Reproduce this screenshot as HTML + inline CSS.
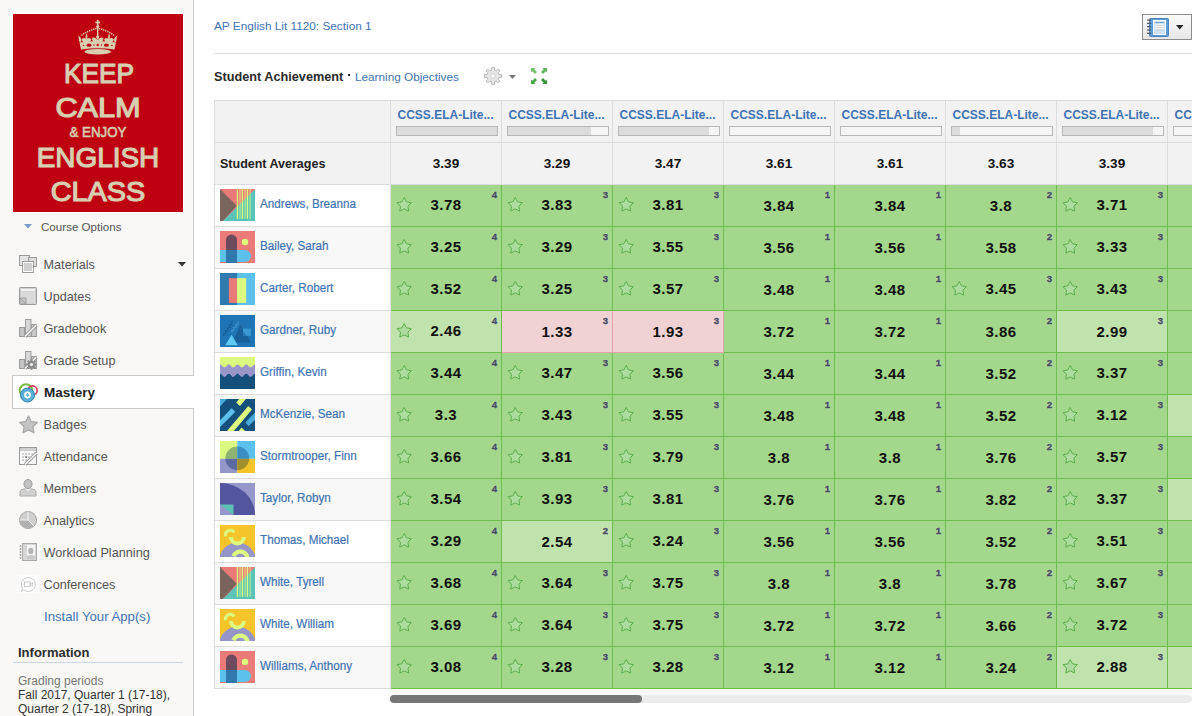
<!DOCTYPE html>
<html><head><meta charset="utf-8"><style>
html,body{margin:0;padding:0;}
body{width:1204px;height:716px;position:relative;overflow:hidden;background:#fff;font-family:"Liberation Sans", sans-serif;}
.t{position:absolute;white-space:nowrap;font-family:"Liberation Sans", sans-serif;}
.st{display:block}
</style></head><body>
<div style="position:absolute;left:0;top:0;width:193px;height:716px;background:#f9f8f6;border-right:1px solid #cbcbcb"></div><div style="position:absolute;left:12px;top:13px;width:170px;height:198px;border:1px solid #fff;background:#be0011;overflow:hidden">
<svg width="170" height="198" viewBox="0 0 170 198" style="position:absolute;left:0;top:0">
<g fill="#d8cfb0" stroke="none">
 <rect x="83.9" y="6" width="1.7" height="5"/><rect x="82.4" y="7.6" width="4.7" height="1.7"/>
 <circle cx="84.7" cy="12.6" r="1.6"/>
 <rect x="84" y="13" width="1.4" height="8"/>
 <path d="M84.7 20L86.4 23L84.7 26L83 23Z"/>
 <path d="M73.5 19.5Q75 22 74.2 24.5Q77 23 78.5 25.5Q77.5 28 75.5 28.5H71.5Q69.5 28 68.5 25.5Q70 23 72.8 24.5Q72 22 73.5 19.5Z"/>
 <path d="M96 19.5Q97.5 22 96.7 24.5Q99.5 23 101 25.5Q100 28 98 28.5H94Q92 28 91 25.5Q92.5 23 95.3 24.5Q94.5 22 96 19.5Z"/>
 <path d="M79 24Q81.5 22.5 84.7 26Q88 22.5 90.4 24Q90 28 88 28.5H81.4Q79.4 28 79 24Z"/>
 <path d="M65.5 21.5Q68 23 68.5 26L67.5 29L66 27Z"/><path d="M103.9 21.5Q101.4 23 100.9 26L101.9 29L103.4 27Z"/>
 <path d="M66.5 28.5Q84.7 25.5 102.9 28.5L101.5 35.5Q84.7 33 68 35.5Z"/>
 <ellipse cx="84.7" cy="37.8" rx="13.2" ry="2.8"/>
</g>
<g fill="none" stroke="#d8cfb0" stroke-width="1.5" stroke-dasharray="1.3 0.9">
 <path d="M83.5 14.5Q75 16.5 67.5 22"/><path d="M85.9 14.5Q94.4 16.5 101.9 22"/>
</g>
<g fill="#be0011"><ellipse cx="76" cy="31.2" rx="2.4" ry="1.6"/><ellipse cx="93.4" cy="31.2" rx="2.4" ry="1.6"/><circle cx="84.7" cy="31" r="1.2"/><circle cx="81" cy="31" r="0.7"/><circle cx="88.4" cy="31" r="0.7"/><circle cx="70.5" cy="31.5" r="0.8"/><circle cx="98.9" cy="31.5" r="0.8"/></g>
</svg>
<div class="t" style="left:-14.5px;top:45.72px;width:200px;text-align:center;font-size:27.5px;line-height:27.5px;font-weight:400;color:#d8cfb2;-webkit-text-stroke:1.15px #d8cfb2;transform:scaleX(0.955);letter-spacing:0px">KEEP</div><div class="t" style="left:-15px;top:79.72px;width:200px;text-align:center;font-size:27.5px;line-height:27.5px;font-weight:400;color:#d8cfb2;-webkit-text-stroke:1.15px #d8cfb2;transform:scaleX(1.115);letter-spacing:0px">CALM</div><div class="t" style="left:-15px;top:110.85px;width:200px;text-align:center;font-size:14px;line-height:14px;font-weight:400;color:#d8cfb2;-webkit-text-stroke:0.55px #d8cfb2;transform:scaleX(0.95);letter-spacing:0px">&amp; ENJOY</div><div class="t" style="left:-15px;top:130.22px;width:200px;text-align:center;font-size:27.5px;line-height:27.5px;font-weight:400;color:#d8cfb2;-webkit-text-stroke:1.15px #d8cfb2;transform:scaleX(1.015);letter-spacing:0px">ENGLISH</div><div class="t" style="left:-15px;top:163.72px;width:200px;text-align:center;font-size:27.5px;line-height:27.5px;font-weight:400;color:#d8cfb2;-webkit-text-stroke:1.15px #d8cfb2;transform:scaleX(1.05);letter-spacing:0px">CLASS</div></div><svg style="position:absolute;left:24px;top:224px" width="8" height="5"><path d="M0 0H8L4 4.5Z" fill="#7a9cc9"/></svg><div class="t" style="left:41px;top:220.88px;font-size:11.6px;line-height:11.6px;color:#555;font-weight:400;text-align:left;">Course Options</div><div style="position:absolute;left:12px;top:375px;width:181px;height:32px;background:#fff;border:1px solid #c8c8c8;border-right:none"></div><div class="t" style="left:43.5px;top:258.95px;font-size:12.7px;line-height:12.7px;color:#555;font-weight:400;text-align:left;">Materials</div><div class="t" style="left:43.5px;top:290.95px;font-size:12.7px;line-height:12.7px;color:#555;font-weight:400;text-align:left;">Updates</div><div class="t" style="left:43.5px;top:322.95px;font-size:12.7px;line-height:12.7px;color:#555;font-weight:400;text-align:left;">Gradebook</div><div class="t" style="left:43.5px;top:354.95px;font-size:12.7px;line-height:12.7px;color:#555;font-weight:400;text-align:left;">Grade Setup</div><div class="t" style="left:44px;top:385.57px;font-size:13.5px;line-height:13.5px;color:#222;font-weight:700;text-align:left;">Mastery</div><div class="t" style="left:43.5px;top:418.95px;font-size:12.7px;line-height:12.7px;color:#555;font-weight:400;text-align:left;">Badges</div><div class="t" style="left:43.5px;top:450.95px;font-size:12.7px;line-height:12.7px;color:#555;font-weight:400;text-align:left;">Attendance</div><div class="t" style="left:43.5px;top:482.95px;font-size:12.7px;line-height:12.7px;color:#555;font-weight:400;text-align:left;">Members</div><div class="t" style="left:43.5px;top:514.95px;font-size:12.7px;line-height:12.7px;color:#555;font-weight:400;text-align:left;">Analytics</div><div class="t" style="left:43.5px;top:546.95px;font-size:12.7px;line-height:12.7px;color:#555;font-weight:400;text-align:left;">Workload Planning</div><div class="t" style="left:43.5px;top:578.95px;font-size:12.7px;line-height:12.7px;color:#555;font-weight:400;text-align:left;">Conferences</div><div class="t" style="left:44px;top:609.63px;font-size:13.2px;line-height:13.2px;color:#3f73b4;font-weight:400;text-align:left;">Install Your App(s)</div><svg style="position:absolute;left:178px;top:262px" width="9" height="5"><path d="M0 0H8L4 4.5Z" fill="#333"/></svg><svg style="position:absolute;left:19px;top:255px;overflow:visible" width="18" height="18" viewBox="0 0 18 18"><rect x="0.5" y="0.5" width="10" height="10" fill="#e4e4e4" stroke="#9a9a9a"/><rect x="9.5" y="2.5" width="8" height="9" fill="#ddd" stroke="#9a9a9a"/><rect x="3.5" y="6.5" width="11" height="11" fill="#fff" stroke="#9a9a9a"/><rect x="5" y="8" width="8" height="8" fill="#cfcfcf"/></svg><svg style="position:absolute;left:19px;top:287px;overflow:visible" width="18" height="18" viewBox="0 0 18 18"><rect x="0.5" y="0.5" width="17" height="17" rx="1" fill="#d2d2d2" stroke="#9a9a9a"/><rect x="2" y="2" width="14" height="2" fill="#f2f2f2"/><rect x="2" y="5" width="14" height="11" fill="#dadada"/><path d="M1 11H7V17H1Z" fill="#c4c4c4" stroke="#9a9a9a" stroke-width="0.8"/><path d="M1 11L7 17" stroke="#9a9a9a"/></svg><svg style="position:absolute;left:19px;top:319px;overflow:visible" width="18" height="18" viewBox="0 0 18 18"><rect x="0.5" y="8.5" width="5" height="9" fill="#c4c4c4" stroke="#9c9c9c"/><rect x="6.5" y="0.5" width="5.5" height="17" fill="#d6d6d6" stroke="#a0a0a0"/><rect x="12.5" y="5.5" width="5" height="12" fill="#c8c8c8" stroke="#9c9c9c"/><path d="M6 17.5L17.5 6" stroke="#9a9a9a" stroke-width="3.2"/><path d="M6 17.5L17.5 6" stroke="#f7f7f7" stroke-width="1.4"/></svg><svg style="position:absolute;left:19px;top:351px;overflow:visible" width="18" height="18" viewBox="0 0 18 18"><rect x="0.5" y="8.5" width="5" height="9" fill="#c4c4c4" stroke="#9c9c9c"/><rect x="6.5" y="0.5" width="5.5" height="17" fill="#d6d6d6" stroke="#a0a0a0"/><rect x="12.5" y="5.5" width="5" height="12" fill="#c8c8c8" stroke="#9c9c9c"/><path d="M6 17.5L17.5 6" stroke="#9a9a9a" stroke-width="3.2"/><path d="M6 17.5L17.5 6" stroke="#f7f7f7" stroke-width="1.4"/><g transform="translate(12.5 13.5)"><circle r="3.6" fill="#8c8c8c"/><path d="M0 -5.3V5.3M-5.3 0H5.3M-3.75 -3.75L3.75 3.75M3.75 -3.75L-3.75 3.75" stroke="#8c8c8c" stroke-width="2"/><circle r="1.6" fill="#f4f4f4"/></g></svg><svg style="position:absolute;left:18px;top:383px" width="21" height="20" viewBox="0 0 21 20"><circle cx="8" cy="7.5" r="6.3" fill="none" stroke="#7cbc45" stroke-width="2"/><circle cx="14.5" cy="7.5" r="4.6" fill="none" stroke="#d23a5a" stroke-width="1.7"/><circle cx="9.5" cy="12" r="7" fill="#5aaed3" stroke="#2f86b3" stroke-width="1"/><circle cx="9.5" cy="12" r="3.4" fill="#fff"/><path d="M9.5 10L11.5 12L9.5 14L7.5 12Z" fill="#62b6dc"/></svg><svg style="position:absolute;left:19px;top:415px;overflow:visible" width="18" height="18" viewBox="0 0 18 18"><path d="M9.50 1.00L12.20 6.58L18.34 7.43L13.87 11.72L14.97 17.82L9.50 14.90L4.03 17.82L5.13 11.72L0.66 7.43L6.80 6.58Z" fill="#c4c4c4" stroke="#a6a6a6" stroke-width="1.2" stroke-linejoin="round"/></svg><svg style="position:absolute;left:19px;top:447px;overflow:visible" width="18" height="18" viewBox="0 0 18 18"><rect x="0.5" y="0.5" width="17" height="17" fill="#fafafa" stroke="#9a9a9a"/><rect x="1" y="1" width="16" height="3" fill="#cfcfcf"/><g fill="#d4d4d4"><rect x="3" y="6" width="2" height="2"/><rect x="6" y="6" width="2" height="2"/><rect x="9" y="6" width="2" height="2"/><rect x="12" y="6" width="2" height="2"/><rect x="3" y="9" width="2" height="2"/><rect x="9" y="9" width="2" height="2"/><rect x="3" y="12" width="2" height="2"/><rect x="6" y="12" width="2" height="2"/></g><rect x="6" y="9" width="2" height="2" fill="#999"/><path d="M6 17.5L17.5 6" stroke="#9a9a9a" stroke-width="3.2"/><path d="M6 17.5L17.5 6" stroke="#f7f7f7" stroke-width="1.4"/></svg><svg style="position:absolute;left:19px;top:479px;overflow:visible" width="18" height="18" viewBox="0 0 18 18"><path d="M1 17V13Q1 10 5 10H13Q17 10 17 13V17Z" fill="#d0d0d0" stroke="#aaa"/><path d="M6 10L9 12L12 10Z" fill="#f4f4f4"/><ellipse cx="9" cy="5" rx="4" ry="4.5" fill="#c4c4c4" stroke="#999"/></svg><svg style="position:absolute;left:19px;top:511px;overflow:visible" width="18" height="18" viewBox="0 0 18 18"><circle cx="9" cy="9" r="8.5" fill="#cfcfcf" stroke="#a5a5a5"/><path d="M9 9H0.5A8.5 8.5 0 0 0 15 15Z" fill="#b0b0b0"/><path d="M9 0.5V9H0.5M9 9L15 15" fill="none" stroke="#f4f4f4" stroke-width="1"/></svg><svg style="position:absolute;left:19px;top:543px;overflow:visible" width="18" height="18" viewBox="0 0 18 18"><rect x="3.5" y="0.5" width="14" height="17" fill="#d6d6d6" stroke="#aaa"/><rect x="8" y="2" width="8" height="14" fill="#f4f4f4"/><ellipse cx="11.8" cy="8" rx="2.6" ry="3.2" fill="#b5b5b5"/><path d="M8 16V14Q8 12 11.8 12Q16 12 16 14V16Z" fill="#c8c8c8"/><g fill="#999"><circle cx="1.5" cy="3" r="0.9"/><circle cx="1.5" cy="6" r="0.9"/><circle cx="1.5" cy="9" r="0.9"/><circle cx="1.5" cy="12" r="0.9"/><circle cx="1.5" cy="15" r="0.9"/></g></svg><svg style="position:absolute;left:19px;top:575px;overflow:visible" width="18" height="18" viewBox="0 0 18 18"><rect x="0" y="0" width="18" height="18" fill="#fcfcfc"/><path d="M9 2.5A7 7 0 1 1 5 15L2.5 16.5L3.5 13.5A7 7 0 0 1 9 2.5Z" fill="none" stroke="#c5c5c5" stroke-width="0.9"/><rect x="5.5" y="7" width="5.5" height="4.5" fill="none" stroke="#c5c5c5" stroke-width="0.9"/><path d="M11 9.2L13.5 7.5V11L11 9.2" fill="none" stroke="#c5c5c5" stroke-width="0.9"/></svg><div class="t" style="left:18px;top:645.50px;font-size:13px;line-height:13px;color:#2d2d2d;font-weight:700;text-align:left;">Information</div><div style="position:absolute;left:13px;top:662px;width:170px;height:1px;background:#c6d6e6"></div><div class="t" style="left:18px;top:674.94px;font-size:12px;line-height:12px;color:#777;font-weight:400;text-align:left;">Grading periods</div><div class="t" style="left:18px;top:688.74px;font-size:12px;line-height:12px;color:#333;font-weight:400;text-align:left;">Fall 2017, Quarter 1 (17-18),</div><div class="t" style="left:18px;top:702.74px;font-size:12px;line-height:12px;color:#333;font-weight:400;text-align:left;">Quarter 2 (17-18), Spring</div><div class="t" style="left:214px;top:20.81px;font-size:11.8px;line-height:11.8px;color:#3f73b4;font-weight:400;text-align:left;">AP English Lit 1120: Section 1</div><div style="position:absolute;left:214px;top:53px;width:978px;height:1px;background:#dcdcdc"></div><div style="position:absolute;left:1142px;top:14px;width:48px;height:24px;border:1px solid #8c8c8c;background:linear-gradient(#fbfbfb,#e6e6e6)"></div>
<svg style="position:absolute;left:1147px;top:17px" width="22" height="20" viewBox="0 0 22 20">
<rect x="2.5" y="1.5" width="19" height="18" rx="1" fill="#5b9bd6" stroke="#4b84bf"/>
<rect x="6" y="3" width="13" height="15" fill="#ffffff"/><rect x="7" y="4" width="11" height="13" fill="#cfe2f5"/>
<rect x="8" y="5" width="9" height="1" fill="#6a9fd6"/><rect x="8.5" y="7.5" width="8" height="5" fill="#fff"/>
<rect x="9" y="8.2" width="7" height="1" fill="#ccc"/><rect x="9" y="10.2" width="7" height="1" fill="#ccc"/><rect x="9" y="12.2" width="7" height="1" fill="#ccc"/>
<g fill="#555"><rect x="0" y="2.5" width="4" height="1.2"/><rect x="0" y="5.8" width="4" height="1.2"/><rect x="0" y="9.1" width="4" height="1.2"/><rect x="0" y="12.4" width="4" height="1.2"/><rect x="0" y="15.7" width="4" height="1.2"/></g>
</svg>
<svg style="position:absolute;left:1176px;top:25px" width="8" height="5"><path d="M0 0H7.5L3.75 4.5Z" fill="#222"/></svg><div class="t" style="left:214px;top:70.75px;font-size:12.7px;line-height:12.7px;color:#2a2a2a;font-weight:700;text-align:left;">Student Achievement</div><div style="position:absolute;left:348px;top:74px;width:2px;height:2px;background:#222"></div><div class="t" style="left:355px;top:70.65px;font-size:11.75px;line-height:11.75px;color:#3f73b4;font-weight:400;text-align:left;">Learning Objectives</div><svg style="position:absolute;left:484px;top:67px" width="18" height="18" viewBox="0 0 18 18">
<path d="M7.5 0.5H10.5V3.2L12.2 3.9L14.1 2L16 3.9L14.1 5.8L14.8 7.5H17.5V10.5H14.8L14.1 12.2L16 14.1L14.1 16L12.2 14.1L10.5 14.8V17.5H7.5V14.8L5.8 14.1L3.9 16L2 14.1L3.9 12.2L3.2 10.5H0.5V7.5H3.2L3.9 5.8L2 3.9L3.9 2L5.8 3.9L7.5 3.2Z" fill="#e6e6e6" stroke="#b9b9b9" stroke-linejoin="round"/>
<circle cx="9" cy="9" r="2.3" fill="#fff" stroke="#c8c8c8" stroke-width="0.8"/></svg>
<svg style="position:absolute;left:509px;top:75px" width="8" height="5"><path d="M0 0H7L3.5 4Z" fill="#777"/></svg>
<svg style="position:absolute;left:531px;top:68px" width="16" height="16" viewBox="0 0 16 16">
<path d="M0 0H4.6L3.3 1.3L6 4L4 6L1.3 3.3L0 4.6Z" fill="#72c06c"/>
<path d="M0 0H4.6L3.3 1.3L6 4L4 6L1.3 3.3L0 4.6Z" fill="#62b55d" transform="translate(16 0) scale(-1 1)"/>
<path d="M0 0H4.6L3.3 1.3L6 4L4 6L1.3 3.3L0 4.6Z" fill="#49a446" transform="translate(0 16) scale(1 -1)"/>
<path d="M0 0H4.6L3.3 1.3L6 4L4 6L1.3 3.3L0 4.6Z" fill="#3b963a" transform="translate(16 16) scale(-1 -1)"/></svg><div style="position:absolute;left:214px;top:100px;width:978px;height:589px;overflow:hidden"><div style="position:absolute;left:0px;top:0px;width:978px;height:85px;background:#f2f2f2"></div><div style="position:absolute;left:0px;top:0px;width:978px;height:1px;background:#dcdcdc"></div><div style="position:absolute;left:0px;top:42px;width:978px;height:1px;background:#dcdcdc"></div><div style="position:absolute;left:0px;top:84px;width:978px;height:1px;background:#dcdcdc"></div><div style="position:absolute;left:0px;top:0px;width:1px;height:589px;background:#dcdcdc"></div><div style="position:absolute;left:176px;top:0px;width:1px;height:85px;background:#dcdcdc"></div><div style="position:absolute;left:287px;top:0px;width:1px;height:85px;background:#dcdcdc"></div><div style="position:absolute;left:398px;top:0px;width:1px;height:85px;background:#dcdcdc"></div><div style="position:absolute;left:509px;top:0px;width:1px;height:85px;background:#dcdcdc"></div><div style="position:absolute;left:620px;top:0px;width:1px;height:85px;background:#dcdcdc"></div><div style="position:absolute;left:731px;top:0px;width:1px;height:85px;background:#dcdcdc"></div><div style="position:absolute;left:842px;top:0px;width:1px;height:85px;background:#dcdcdc"></div><div style="position:absolute;left:953px;top:0px;width:1px;height:85px;background:#dcdcdc"></div><div class="t" style="left:176.5px;top:9.24px;font-size:12px;line-height:12px;color:#3f73b4;font-weight:700;width:110px;text-align:center;white-space:nowrap">CCSS.ELA-Lite...</div><div style="position:absolute;left:182px;top:26px;width:100px;height:8px;background:#f5f5f5;border:1px solid #b8b8b8"></div><div style="position:absolute;left:183px;top:27px;width:100px;height:8px;background:#dcdcdc"></div><div class="t" style="left:177px;top:56.99px;font-size:13.6px;line-height:13.6px;color:#111;font-weight:700;width:110px;text-align:center;">3.39</div><div class="t" style="left:287.5px;top:9.24px;font-size:12px;line-height:12px;color:#3f73b4;font-weight:700;width:110px;text-align:center;white-space:nowrap">CCSS.ELA-Lite...</div><div style="position:absolute;left:293px;top:26px;width:100px;height:8px;background:#f5f5f5;border:1px solid #b8b8b8"></div><div style="position:absolute;left:294px;top:27px;width:83px;height:8px;background:#dcdcdc"></div><div class="t" style="left:288px;top:56.99px;font-size:13.6px;line-height:13.6px;color:#111;font-weight:700;width:110px;text-align:center;">3.29</div><div class="t" style="left:398.5px;top:9.24px;font-size:12px;line-height:12px;color:#3f73b4;font-weight:700;width:110px;text-align:center;white-space:nowrap">CCSS.ELA-Lite...</div><div style="position:absolute;left:404px;top:26px;width:100px;height:8px;background:#f5f5f5;border:1px solid #b8b8b8"></div><div style="position:absolute;left:405px;top:27px;width:90px;height:8px;background:#dcdcdc"></div><div class="t" style="left:399px;top:56.99px;font-size:13.6px;line-height:13.6px;color:#111;font-weight:700;width:110px;text-align:center;">3.47</div><div class="t" style="left:509.5px;top:9.24px;font-size:12px;line-height:12px;color:#3f73b4;font-weight:700;width:110px;text-align:center;white-space:nowrap">CCSS.ELA-Lite...</div><div style="position:absolute;left:515px;top:26px;width:100px;height:8px;background:#f5f5f5;border:1px solid #b8b8b8"></div><div class="t" style="left:510px;top:56.99px;font-size:13.6px;line-height:13.6px;color:#111;font-weight:700;width:110px;text-align:center;">3.61</div><div class="t" style="left:620.5px;top:9.24px;font-size:12px;line-height:12px;color:#3f73b4;font-weight:700;width:110px;text-align:center;white-space:nowrap">CCSS.ELA-Lite...</div><div style="position:absolute;left:626px;top:26px;width:100px;height:8px;background:#f5f5f5;border:1px solid #b8b8b8"></div><div class="t" style="left:621px;top:56.99px;font-size:13.6px;line-height:13.6px;color:#111;font-weight:700;width:110px;text-align:center;">3.61</div><div class="t" style="left:731.5px;top:9.24px;font-size:12px;line-height:12px;color:#3f73b4;font-weight:700;width:110px;text-align:center;white-space:nowrap">CCSS.ELA-Lite...</div><div style="position:absolute;left:737px;top:26px;width:100px;height:8px;background:#f5f5f5;border:1px solid #b8b8b8"></div><div style="position:absolute;left:738px;top:27px;width:8px;height:8px;background:#dcdcdc"></div><div class="t" style="left:732px;top:56.99px;font-size:13.6px;line-height:13.6px;color:#111;font-weight:700;width:110px;text-align:center;">3.63</div><div class="t" style="left:842.5px;top:9.24px;font-size:12px;line-height:12px;color:#3f73b4;font-weight:700;width:110px;text-align:center;white-space:nowrap">CCSS.ELA-Lite...</div><div style="position:absolute;left:848px;top:26px;width:100px;height:8px;background:#f5f5f5;border:1px solid #b8b8b8"></div><div style="position:absolute;left:849px;top:27px;width:90px;height:8px;background:#dcdcdc"></div><div class="t" style="left:843px;top:56.99px;font-size:13.6px;line-height:13.6px;color:#111;font-weight:700;width:110px;text-align:center;">3.39</div><div class="t" style="left:953.5px;top:9.24px;font-size:12px;line-height:12px;color:#3f73b4;font-weight:700;width:110px;text-align:center;white-space:nowrap">CCSS.ELA-Lite...</div><div style="position:absolute;left:959px;top:26px;width:100px;height:8px;background:#f5f5f5;border:1px solid #b8b8b8"></div><div class="t" style="left:6px;top:57.92px;font-size:12.5px;line-height:12.5px;color:#222;font-weight:700;text-align:left;">Student Averages</div><div style="position:absolute;left:1px;top:85px;width:175px;height:41px;background:#fff"></div><div style="position:absolute;left:0px;top:126px;width:176px;height:1px;background:#dcdcdc"></div><div style="position:absolute;left:176px;top:85px;width:1px;height:42px;background:#e4dde6"></div><svg style="position:absolute;left:6px;top:89px" width="35" height="32" viewBox="0 0 35 32"><rect width="35" height="32" fill="#e97a78"/><path d="M0 0L16.8 16.8L2.9 32H0Z" fill="#7a655d"/><path d="M35 0.3V32H2.9Z" fill="#5bc3b7"/><g fill="#dcfb7f"><rect x="16.8" y="0" width="1.3" height="29.9"/><rect x="21.8" y="0" width="1.3" height="29.9"/><rect x="26.8" y="0" width="1.3" height="29.9"/></g><g fill="#dcfb7f" opacity="0.45"><rect x="19.2" y="0" width="1.8" height="29.9"/><rect x="24.2" y="0" width="1.8" height="29.9"/><rect x="29.2" y="0" width="1.8" height="29.9"/></g></svg><div class="t" style="left:46px;top:97.89px;font-size:12.3px;line-height:12.3px;color:#3f73b4;font-weight:400;text-align:left;-webkit-text-stroke:0.2px #3f73b4;transform:scaleX(0.95);transform-origin:0 0">Andrews, Breanna</div><div style="position:absolute;left:177px;top:85px;width:111px;height:42px;background:#a3d78b"></div><div style="position:absolute;left:288px;top:85px;width:111px;height:42px;background:#a3d78b"></div><div style="position:absolute;left:399px;top:85px;width:111px;height:42px;background:#a3d78b"></div><div style="position:absolute;left:510px;top:85px;width:111px;height:42px;background:#a3d78b"></div><div style="position:absolute;left:621px;top:85px;width:111px;height:42px;background:#a3d78b"></div><div style="position:absolute;left:732px;top:85px;width:111px;height:42px;background:#a3d78b"></div><div style="position:absolute;left:843px;top:85px;width:111px;height:42px;background:#a3d78b"></div><div style="position:absolute;left:954px;top:85px;width:111px;height:42px;background:#a3d78b"></div><div style="position:absolute;left:287px;top:85px;width:1px;height:42px;background:#6dbe4f"></div><div style="position:absolute;left:177px;top:126px;width:111px;height:1px;background:#6dbe4f"></div><div style="position:absolute;left:398px;top:85px;width:1px;height:42px;background:#6dbe4f"></div><div style="position:absolute;left:288px;top:126px;width:111px;height:1px;background:#6dbe4f"></div><div style="position:absolute;left:509px;top:85px;width:1px;height:42px;background:#6dbe4f"></div><div style="position:absolute;left:399px;top:126px;width:111px;height:1px;background:#6dbe4f"></div><div style="position:absolute;left:620px;top:85px;width:1px;height:42px;background:#6dbe4f"></div><div style="position:absolute;left:510px;top:126px;width:111px;height:1px;background:#6dbe4f"></div><div style="position:absolute;left:731px;top:85px;width:1px;height:42px;background:#6dbe4f"></div><div style="position:absolute;left:621px;top:126px;width:111px;height:1px;background:#6dbe4f"></div><div style="position:absolute;left:842px;top:85px;width:1px;height:42px;background:#6dbe4f"></div><div style="position:absolute;left:732px;top:126px;width:111px;height:1px;background:#6dbe4f"></div><div style="position:absolute;left:953px;top:85px;width:1px;height:42px;background:#6dbe4f"></div><div style="position:absolute;left:843px;top:126px;width:111px;height:1px;background:#6dbe4f"></div><div style="position:absolute;left:1064px;top:85px;width:1px;height:42px;background:#6dbe4f"></div><div style="position:absolute;left:954px;top:126px;width:111px;height:1px;background:#6dbe4f"></div><div style="position:absolute;left:181px;top:96px"><svg class="st" width="18" height="17" viewBox="0 0 18 17"><path d="M9.20 1.50L11.49 5.84L16.33 6.68L12.91 10.21L13.61 15.07L9.20 12.90L4.79 15.07L5.49 10.21L2.07 6.68L6.91 5.84Z" fill="#addd9e" stroke="#5aae4a" stroke-width="1.0" stroke-linejoin="round"/></svg></div><div class="t" style="left:177px;top:96.80px;font-size:15px;line-height:15px;color:#111;font-weight:700;width:110px;text-align:center;letter-spacing:0.5px">3.78</div><div class="t" style="left:272px;top:90.47px;font-size:9.6px;line-height:9.6px;color:#464c63;font-weight:700;width:11px;text-align:right;text-shadow:0 0 2px rgba(255,255,255,.6);-webkit-text-stroke:0.35px #464c63">4</div><div style="position:absolute;left:292px;top:96px"><svg class="st" width="18" height="17" viewBox="0 0 18 17"><path d="M9.20 1.50L11.49 5.84L16.33 6.68L12.91 10.21L13.61 15.07L9.20 12.90L4.79 15.07L5.49 10.21L2.07 6.68L6.91 5.84Z" fill="#addd9e" stroke="#5aae4a" stroke-width="1.0" stroke-linejoin="round"/></svg></div><div class="t" style="left:288px;top:96.80px;font-size:15px;line-height:15px;color:#111;font-weight:700;width:110px;text-align:center;letter-spacing:0.5px">3.83</div><div class="t" style="left:383px;top:90.47px;font-size:9.6px;line-height:9.6px;color:#464c63;font-weight:700;width:11px;text-align:right;text-shadow:0 0 2px rgba(255,255,255,.6);-webkit-text-stroke:0.35px #464c63">3</div><div style="position:absolute;left:403px;top:96px"><svg class="st" width="18" height="17" viewBox="0 0 18 17"><path d="M9.20 1.50L11.49 5.84L16.33 6.68L12.91 10.21L13.61 15.07L9.20 12.90L4.79 15.07L5.49 10.21L2.07 6.68L6.91 5.84Z" fill="#addd9e" stroke="#5aae4a" stroke-width="1.0" stroke-linejoin="round"/></svg></div><div class="t" style="left:399px;top:96.80px;font-size:15px;line-height:15px;color:#111;font-weight:700;width:110px;text-align:center;letter-spacing:0.5px">3.81</div><div class="t" style="left:494px;top:90.47px;font-size:9.6px;line-height:9.6px;color:#464c63;font-weight:700;width:11px;text-align:right;text-shadow:0 0 2px rgba(255,255,255,.6);-webkit-text-stroke:0.35px #464c63">3</div><div class="t" style="left:510px;top:97.80px;font-size:15px;line-height:15px;color:#111;font-weight:700;width:110px;text-align:center;letter-spacing:0.5px">3.84</div><div class="t" style="left:605px;top:90.47px;font-size:9.6px;line-height:9.6px;color:#464c63;font-weight:700;width:11px;text-align:right;text-shadow:0 0 2px rgba(255,255,255,.6);-webkit-text-stroke:0.35px #464c63">1</div><div class="t" style="left:621px;top:97.80px;font-size:15px;line-height:15px;color:#111;font-weight:700;width:110px;text-align:center;letter-spacing:0.5px">3.84</div><div class="t" style="left:716px;top:90.47px;font-size:9.6px;line-height:9.6px;color:#464c63;font-weight:700;width:11px;text-align:right;text-shadow:0 0 2px rgba(255,255,255,.6);-webkit-text-stroke:0.35px #464c63">1</div><div class="t" style="left:732px;top:97.80px;font-size:15px;line-height:15px;color:#111;font-weight:700;width:110px;text-align:center;letter-spacing:0.5px">3.8</div><div class="t" style="left:827px;top:90.47px;font-size:9.6px;line-height:9.6px;color:#464c63;font-weight:700;width:11px;text-align:right;text-shadow:0 0 2px rgba(255,255,255,.6);-webkit-text-stroke:0.35px #464c63">2</div><div style="position:absolute;left:847px;top:96px"><svg class="st" width="18" height="17" viewBox="0 0 18 17"><path d="M9.20 1.50L11.49 5.84L16.33 6.68L12.91 10.21L13.61 15.07L9.20 12.90L4.79 15.07L5.49 10.21L2.07 6.68L6.91 5.84Z" fill="#addd9e" stroke="#5aae4a" stroke-width="1.0" stroke-linejoin="round"/></svg></div><div class="t" style="left:843px;top:96.80px;font-size:15px;line-height:15px;color:#111;font-weight:700;width:110px;text-align:center;letter-spacing:0.5px">3.71</div><div class="t" style="left:938px;top:90.47px;font-size:9.6px;line-height:9.6px;color:#464c63;font-weight:700;width:11px;text-align:right;text-shadow:0 0 2px rgba(255,255,255,.6);-webkit-text-stroke:0.35px #464c63">3</div><div style="position:absolute;left:1px;top:127px;width:175px;height:41px;background:#f8f8f8"></div><div style="position:absolute;left:0px;top:168px;width:176px;height:1px;background:#dcdcdc"></div><div style="position:absolute;left:176px;top:127px;width:1px;height:42px;background:#e4dde6"></div><svg style="position:absolute;left:6px;top:131px" width="35" height="32" viewBox="0 0 35 32"><rect width="35" height="32" fill="#ea7b78"/><rect x="0" y="19" width="31" height="12" rx="6" fill="#5cc2ec"/><rect x="0" y="19" width="8" height="12" fill="#5cc2ec"/><rect x="6" y="3.5" width="11" height="28.5" rx="5.5" fill="#6d4a5d"/><rect x="6" y="24" width="11" height="8" fill="#6d4a5d"/><rect x="6" y="19" width="11" height="13" fill="#2f79ad"/><circle cx="25" cy="11" r="3.2" fill="#dcfb7f"/></svg><div class="t" style="left:46px;top:139.89px;font-size:12.3px;line-height:12.3px;color:#3f73b4;font-weight:400;text-align:left;-webkit-text-stroke:0.2px #3f73b4;transform:scaleX(0.95);transform-origin:0 0">Bailey, Sarah</div><div style="position:absolute;left:177px;top:127px;width:111px;height:42px;background:#a3d78b"></div><div style="position:absolute;left:288px;top:127px;width:111px;height:42px;background:#a3d78b"></div><div style="position:absolute;left:399px;top:127px;width:111px;height:42px;background:#a3d78b"></div><div style="position:absolute;left:510px;top:127px;width:111px;height:42px;background:#a3d78b"></div><div style="position:absolute;left:621px;top:127px;width:111px;height:42px;background:#a3d78b"></div><div style="position:absolute;left:732px;top:127px;width:111px;height:42px;background:#a3d78b"></div><div style="position:absolute;left:843px;top:127px;width:111px;height:42px;background:#a3d78b"></div><div style="position:absolute;left:954px;top:127px;width:111px;height:42px;background:#a3d78b"></div><div style="position:absolute;left:287px;top:127px;width:1px;height:42px;background:#6dbe4f"></div><div style="position:absolute;left:177px;top:168px;width:111px;height:1px;background:#6dbe4f"></div><div style="position:absolute;left:398px;top:127px;width:1px;height:42px;background:#6dbe4f"></div><div style="position:absolute;left:288px;top:168px;width:111px;height:1px;background:#6dbe4f"></div><div style="position:absolute;left:509px;top:127px;width:1px;height:42px;background:#6dbe4f"></div><div style="position:absolute;left:399px;top:168px;width:111px;height:1px;background:#6dbe4f"></div><div style="position:absolute;left:620px;top:127px;width:1px;height:42px;background:#6dbe4f"></div><div style="position:absolute;left:510px;top:168px;width:111px;height:1px;background:#6dbe4f"></div><div style="position:absolute;left:731px;top:127px;width:1px;height:42px;background:#6dbe4f"></div><div style="position:absolute;left:621px;top:168px;width:111px;height:1px;background:#6dbe4f"></div><div style="position:absolute;left:842px;top:127px;width:1px;height:42px;background:#6dbe4f"></div><div style="position:absolute;left:732px;top:168px;width:111px;height:1px;background:#6dbe4f"></div><div style="position:absolute;left:953px;top:127px;width:1px;height:42px;background:#6dbe4f"></div><div style="position:absolute;left:843px;top:168px;width:111px;height:1px;background:#6dbe4f"></div><div style="position:absolute;left:1064px;top:127px;width:1px;height:42px;background:#6dbe4f"></div><div style="position:absolute;left:954px;top:168px;width:111px;height:1px;background:#6dbe4f"></div><div style="position:absolute;left:181px;top:138px"><svg class="st" width="18" height="17" viewBox="0 0 18 17"><path d="M9.20 1.50L11.49 5.84L16.33 6.68L12.91 10.21L13.61 15.07L9.20 12.90L4.79 15.07L5.49 10.21L2.07 6.68L6.91 5.84Z" fill="#addd9e" stroke="#5aae4a" stroke-width="1.0" stroke-linejoin="round"/></svg></div><div class="t" style="left:177px;top:138.80px;font-size:15px;line-height:15px;color:#111;font-weight:700;width:110px;text-align:center;letter-spacing:0.5px">3.25</div><div class="t" style="left:272px;top:132.47px;font-size:9.6px;line-height:9.6px;color:#464c63;font-weight:700;width:11px;text-align:right;text-shadow:0 0 2px rgba(255,255,255,.6);-webkit-text-stroke:0.35px #464c63">4</div><div style="position:absolute;left:292px;top:138px"><svg class="st" width="18" height="17" viewBox="0 0 18 17"><path d="M9.20 1.50L11.49 5.84L16.33 6.68L12.91 10.21L13.61 15.07L9.20 12.90L4.79 15.07L5.49 10.21L2.07 6.68L6.91 5.84Z" fill="#addd9e" stroke="#5aae4a" stroke-width="1.0" stroke-linejoin="round"/></svg></div><div class="t" style="left:288px;top:138.80px;font-size:15px;line-height:15px;color:#111;font-weight:700;width:110px;text-align:center;letter-spacing:0.5px">3.29</div><div class="t" style="left:383px;top:132.47px;font-size:9.6px;line-height:9.6px;color:#464c63;font-weight:700;width:11px;text-align:right;text-shadow:0 0 2px rgba(255,255,255,.6);-webkit-text-stroke:0.35px #464c63">3</div><div style="position:absolute;left:403px;top:138px"><svg class="st" width="18" height="17" viewBox="0 0 18 17"><path d="M9.20 1.50L11.49 5.84L16.33 6.68L12.91 10.21L13.61 15.07L9.20 12.90L4.79 15.07L5.49 10.21L2.07 6.68L6.91 5.84Z" fill="#addd9e" stroke="#5aae4a" stroke-width="1.0" stroke-linejoin="round"/></svg></div><div class="t" style="left:399px;top:138.80px;font-size:15px;line-height:15px;color:#111;font-weight:700;width:110px;text-align:center;letter-spacing:0.5px">3.55</div><div class="t" style="left:494px;top:132.47px;font-size:9.6px;line-height:9.6px;color:#464c63;font-weight:700;width:11px;text-align:right;text-shadow:0 0 2px rgba(255,255,255,.6);-webkit-text-stroke:0.35px #464c63">3</div><div class="t" style="left:510px;top:139.80px;font-size:15px;line-height:15px;color:#111;font-weight:700;width:110px;text-align:center;letter-spacing:0.5px">3.56</div><div class="t" style="left:605px;top:132.47px;font-size:9.6px;line-height:9.6px;color:#464c63;font-weight:700;width:11px;text-align:right;text-shadow:0 0 2px rgba(255,255,255,.6);-webkit-text-stroke:0.35px #464c63">1</div><div class="t" style="left:621px;top:139.80px;font-size:15px;line-height:15px;color:#111;font-weight:700;width:110px;text-align:center;letter-spacing:0.5px">3.56</div><div class="t" style="left:716px;top:132.47px;font-size:9.6px;line-height:9.6px;color:#464c63;font-weight:700;width:11px;text-align:right;text-shadow:0 0 2px rgba(255,255,255,.6);-webkit-text-stroke:0.35px #464c63">1</div><div class="t" style="left:732px;top:139.80px;font-size:15px;line-height:15px;color:#111;font-weight:700;width:110px;text-align:center;letter-spacing:0.5px">3.58</div><div class="t" style="left:827px;top:132.47px;font-size:9.6px;line-height:9.6px;color:#464c63;font-weight:700;width:11px;text-align:right;text-shadow:0 0 2px rgba(255,255,255,.6);-webkit-text-stroke:0.35px #464c63">2</div><div style="position:absolute;left:847px;top:138px"><svg class="st" width="18" height="17" viewBox="0 0 18 17"><path d="M9.20 1.50L11.49 5.84L16.33 6.68L12.91 10.21L13.61 15.07L9.20 12.90L4.79 15.07L5.49 10.21L2.07 6.68L6.91 5.84Z" fill="#addd9e" stroke="#5aae4a" stroke-width="1.0" stroke-linejoin="round"/></svg></div><div class="t" style="left:843px;top:138.80px;font-size:15px;line-height:15px;color:#111;font-weight:700;width:110px;text-align:center;letter-spacing:0.5px">3.33</div><div class="t" style="left:938px;top:132.47px;font-size:9.6px;line-height:9.6px;color:#464c63;font-weight:700;width:11px;text-align:right;text-shadow:0 0 2px rgba(255,255,255,.6);-webkit-text-stroke:0.35px #464c63">3</div><div style="position:absolute;left:1px;top:169px;width:175px;height:41px;background:#fff"></div><div style="position:absolute;left:0px;top:210px;width:176px;height:1px;background:#dcdcdc"></div><div style="position:absolute;left:176px;top:169px;width:1px;height:42px;background:#e4dde6"></div><svg style="position:absolute;left:6px;top:173px" width="35" height="32" viewBox="0 0 35 32"><rect width="35" height="32" fill="#5bc0eb"/><rect x="0" y="0" width="17.1" height="32" fill="#2f7bb0"/><rect x="8.9" y="5.1" width="8.2" height="24.8" fill="#e97a78"/><rect x="17.1" y="5.1" width="9.1" height="24.8" fill="#dcfb7f"/></svg><div class="t" style="left:46px;top:181.89px;font-size:12.3px;line-height:12.3px;color:#3f73b4;font-weight:400;text-align:left;-webkit-text-stroke:0.2px #3f73b4;transform:scaleX(0.95);transform-origin:0 0">Carter, Robert</div><div style="position:absolute;left:177px;top:169px;width:111px;height:42px;background:#a3d78b"></div><div style="position:absolute;left:288px;top:169px;width:111px;height:42px;background:#a3d78b"></div><div style="position:absolute;left:399px;top:169px;width:111px;height:42px;background:#a3d78b"></div><div style="position:absolute;left:510px;top:169px;width:111px;height:42px;background:#a3d78b"></div><div style="position:absolute;left:621px;top:169px;width:111px;height:42px;background:#a3d78b"></div><div style="position:absolute;left:732px;top:169px;width:111px;height:42px;background:#a3d78b"></div><div style="position:absolute;left:843px;top:169px;width:111px;height:42px;background:#a3d78b"></div><div style="position:absolute;left:954px;top:169px;width:111px;height:42px;background:#a3d78b"></div><div style="position:absolute;left:287px;top:169px;width:1px;height:42px;background:#6dbe4f"></div><div style="position:absolute;left:177px;top:210px;width:111px;height:1px;background:#6dbe4f"></div><div style="position:absolute;left:398px;top:169px;width:1px;height:42px;background:#6dbe4f"></div><div style="position:absolute;left:288px;top:210px;width:111px;height:1px;background:#6dbe4f"></div><div style="position:absolute;left:509px;top:169px;width:1px;height:42px;background:#6dbe4f"></div><div style="position:absolute;left:399px;top:210px;width:111px;height:1px;background:#6dbe4f"></div><div style="position:absolute;left:620px;top:169px;width:1px;height:42px;background:#6dbe4f"></div><div style="position:absolute;left:510px;top:210px;width:111px;height:1px;background:#6dbe4f"></div><div style="position:absolute;left:731px;top:169px;width:1px;height:42px;background:#6dbe4f"></div><div style="position:absolute;left:621px;top:210px;width:111px;height:1px;background:#6dbe4f"></div><div style="position:absolute;left:842px;top:169px;width:1px;height:42px;background:#6dbe4f"></div><div style="position:absolute;left:732px;top:210px;width:111px;height:1px;background:#6dbe4f"></div><div style="position:absolute;left:953px;top:169px;width:1px;height:42px;background:#6dbe4f"></div><div style="position:absolute;left:843px;top:210px;width:111px;height:1px;background:#6dbe4f"></div><div style="position:absolute;left:1064px;top:169px;width:1px;height:42px;background:#6dbe4f"></div><div style="position:absolute;left:954px;top:210px;width:111px;height:1px;background:#6dbe4f"></div><div style="position:absolute;left:181px;top:180px"><svg class="st" width="18" height="17" viewBox="0 0 18 17"><path d="M9.20 1.50L11.49 5.84L16.33 6.68L12.91 10.21L13.61 15.07L9.20 12.90L4.79 15.07L5.49 10.21L2.07 6.68L6.91 5.84Z" fill="#addd9e" stroke="#5aae4a" stroke-width="1.0" stroke-linejoin="round"/></svg></div><div class="t" style="left:177px;top:180.80px;font-size:15px;line-height:15px;color:#111;font-weight:700;width:110px;text-align:center;letter-spacing:0.5px">3.52</div><div class="t" style="left:272px;top:174.47px;font-size:9.6px;line-height:9.6px;color:#464c63;font-weight:700;width:11px;text-align:right;text-shadow:0 0 2px rgba(255,255,255,.6);-webkit-text-stroke:0.35px #464c63">4</div><div style="position:absolute;left:292px;top:180px"><svg class="st" width="18" height="17" viewBox="0 0 18 17"><path d="M9.20 1.50L11.49 5.84L16.33 6.68L12.91 10.21L13.61 15.07L9.20 12.90L4.79 15.07L5.49 10.21L2.07 6.68L6.91 5.84Z" fill="#addd9e" stroke="#5aae4a" stroke-width="1.0" stroke-linejoin="round"/></svg></div><div class="t" style="left:288px;top:180.80px;font-size:15px;line-height:15px;color:#111;font-weight:700;width:110px;text-align:center;letter-spacing:0.5px">3.25</div><div class="t" style="left:383px;top:174.47px;font-size:9.6px;line-height:9.6px;color:#464c63;font-weight:700;width:11px;text-align:right;text-shadow:0 0 2px rgba(255,255,255,.6);-webkit-text-stroke:0.35px #464c63">3</div><div style="position:absolute;left:403px;top:180px"><svg class="st" width="18" height="17" viewBox="0 0 18 17"><path d="M9.20 1.50L11.49 5.84L16.33 6.68L12.91 10.21L13.61 15.07L9.20 12.90L4.79 15.07L5.49 10.21L2.07 6.68L6.91 5.84Z" fill="#addd9e" stroke="#5aae4a" stroke-width="1.0" stroke-linejoin="round"/></svg></div><div class="t" style="left:399px;top:180.80px;font-size:15px;line-height:15px;color:#111;font-weight:700;width:110px;text-align:center;letter-spacing:0.5px">3.57</div><div class="t" style="left:494px;top:174.47px;font-size:9.6px;line-height:9.6px;color:#464c63;font-weight:700;width:11px;text-align:right;text-shadow:0 0 2px rgba(255,255,255,.6);-webkit-text-stroke:0.35px #464c63">3</div><div class="t" style="left:510px;top:181.80px;font-size:15px;line-height:15px;color:#111;font-weight:700;width:110px;text-align:center;letter-spacing:0.5px">3.48</div><div class="t" style="left:605px;top:174.47px;font-size:9.6px;line-height:9.6px;color:#464c63;font-weight:700;width:11px;text-align:right;text-shadow:0 0 2px rgba(255,255,255,.6);-webkit-text-stroke:0.35px #464c63">1</div><div class="t" style="left:621px;top:181.80px;font-size:15px;line-height:15px;color:#111;font-weight:700;width:110px;text-align:center;letter-spacing:0.5px">3.48</div><div class="t" style="left:716px;top:174.47px;font-size:9.6px;line-height:9.6px;color:#464c63;font-weight:700;width:11px;text-align:right;text-shadow:0 0 2px rgba(255,255,255,.6);-webkit-text-stroke:0.35px #464c63">1</div><div style="position:absolute;left:736px;top:180px"><svg class="st" width="18" height="17" viewBox="0 0 18 17"><path d="M9.20 1.50L11.49 5.84L16.33 6.68L12.91 10.21L13.61 15.07L9.20 12.90L4.79 15.07L5.49 10.21L2.07 6.68L6.91 5.84Z" fill="#addd9e" stroke="#5aae4a" stroke-width="1.0" stroke-linejoin="round"/></svg></div><div class="t" style="left:732px;top:180.80px;font-size:15px;line-height:15px;color:#111;font-weight:700;width:110px;text-align:center;letter-spacing:0.5px">3.45</div><div class="t" style="left:827px;top:174.47px;font-size:9.6px;line-height:9.6px;color:#464c63;font-weight:700;width:11px;text-align:right;text-shadow:0 0 2px rgba(255,255,255,.6);-webkit-text-stroke:0.35px #464c63">3</div><div style="position:absolute;left:847px;top:180px"><svg class="st" width="18" height="17" viewBox="0 0 18 17"><path d="M9.20 1.50L11.49 5.84L16.33 6.68L12.91 10.21L13.61 15.07L9.20 12.90L4.79 15.07L5.49 10.21L2.07 6.68L6.91 5.84Z" fill="#addd9e" stroke="#5aae4a" stroke-width="1.0" stroke-linejoin="round"/></svg></div><div class="t" style="left:843px;top:180.80px;font-size:15px;line-height:15px;color:#111;font-weight:700;width:110px;text-align:center;letter-spacing:0.5px">3.43</div><div class="t" style="left:938px;top:174.47px;font-size:9.6px;line-height:9.6px;color:#464c63;font-weight:700;width:11px;text-align:right;text-shadow:0 0 2px rgba(255,255,255,.6);-webkit-text-stroke:0.35px #464c63">3</div><div style="position:absolute;left:1px;top:211px;width:175px;height:41px;background:#f8f8f8"></div><div style="position:absolute;left:0px;top:252px;width:176px;height:1px;background:#dcdcdc"></div><div style="position:absolute;left:176px;top:211px;width:1px;height:42px;background:#e4dde6"></div><svg style="position:absolute;left:6px;top:215px" width="35" height="32" viewBox="0 0 35 32"><rect width="35" height="32" fill="#1f74b6"/><path d="M20.4 9.8L31 27.5H12.5Z" fill="#17609a"/><rect x="23" y="13.6" width="8" height="7.3" fill="#3898d2"/><path d="M23 13.6L31 27.5V20.9H27.2Z" fill="#1f79b6" opacity="0"/><path d="M23 16L26.7 20.9H23Z" fill="#2479b5"/><path d="M11.6 19.8L17.8 30.3H5.1Z" fill="#5ccaf3"/><path d="M4 21L3.5 19L6 18.5L5.5 16L8 15.5L7.5 13L10 12.5L9.5 10L12 9.5L11.5 7L13 6" fill="none" stroke="#16609a" stroke-width="1.3"/><path d="M12 17.5L11.8 15.5L14 15L13.8 12.8L16 12.3L15.8 10L18 9.5L17.8 7.3L19 6.5" fill="none" stroke="#3a8fcc" stroke-width="1.3"/></svg><div class="t" style="left:46px;top:223.89px;font-size:12.3px;line-height:12.3px;color:#3f73b4;font-weight:400;text-align:left;-webkit-text-stroke:0.2px #3f73b4;transform:scaleX(0.95);transform-origin:0 0">Gardner, Ruby</div><div style="position:absolute;left:177px;top:211px;width:111px;height:42px;background:#c0e3ad"></div><div style="position:absolute;left:288px;top:211px;width:111px;height:42px;background:#f0d2d4"></div><div style="position:absolute;left:399px;top:211px;width:111px;height:42px;background:#f0d2d4"></div><div style="position:absolute;left:510px;top:211px;width:111px;height:42px;background:#a3d78b"></div><div style="position:absolute;left:621px;top:211px;width:111px;height:42px;background:#a3d78b"></div><div style="position:absolute;left:732px;top:211px;width:111px;height:42px;background:#a3d78b"></div><div style="position:absolute;left:843px;top:211px;width:111px;height:42px;background:#c0e3ad"></div><div style="position:absolute;left:954px;top:211px;width:111px;height:42px;background:#a3d78b"></div><div style="position:absolute;left:287px;top:211px;width:1px;height:42px;background:#6dbe4f"></div><div style="position:absolute;left:177px;top:252px;width:111px;height:1px;background:#6dbe4f"></div><div style="position:absolute;left:398px;top:211px;width:1px;height:42px;background:#e3a3aa"></div><div style="position:absolute;left:288px;top:252px;width:111px;height:1px;background:#e3a3aa"></div><div style="position:absolute;left:509px;top:211px;width:1px;height:42px;background:#e3a3aa"></div><div style="position:absolute;left:399px;top:252px;width:111px;height:1px;background:#e3a3aa"></div><div style="position:absolute;left:620px;top:211px;width:1px;height:42px;background:#6dbe4f"></div><div style="position:absolute;left:510px;top:252px;width:111px;height:1px;background:#6dbe4f"></div><div style="position:absolute;left:731px;top:211px;width:1px;height:42px;background:#6dbe4f"></div><div style="position:absolute;left:621px;top:252px;width:111px;height:1px;background:#6dbe4f"></div><div style="position:absolute;left:842px;top:211px;width:1px;height:42px;background:#6dbe4f"></div><div style="position:absolute;left:732px;top:252px;width:111px;height:1px;background:#6dbe4f"></div><div style="position:absolute;left:953px;top:211px;width:1px;height:42px;background:#6dbe4f"></div><div style="position:absolute;left:843px;top:252px;width:111px;height:1px;background:#6dbe4f"></div><div style="position:absolute;left:1064px;top:211px;width:1px;height:42px;background:#6dbe4f"></div><div style="position:absolute;left:954px;top:252px;width:111px;height:1px;background:#6dbe4f"></div><div style="position:absolute;left:181px;top:222px"><svg class="st" width="18" height="17" viewBox="0 0 18 17"><path d="M9.20 1.50L11.49 5.84L16.33 6.68L12.91 10.21L13.61 15.07L9.20 12.90L4.79 15.07L5.49 10.21L2.07 6.68L6.91 5.84Z" fill="#addd9e" stroke="#5aae4a" stroke-width="1.0" stroke-linejoin="round"/></svg></div><div class="t" style="left:177px;top:222.80px;font-size:15px;line-height:15px;color:#111;font-weight:700;width:110px;text-align:center;letter-spacing:0.5px">2.46</div><div class="t" style="left:272px;top:216.47px;font-size:9.6px;line-height:9.6px;color:#464c63;font-weight:700;width:11px;text-align:right;text-shadow:0 0 2px rgba(255,255,255,.6);-webkit-text-stroke:0.35px #464c63">4</div><div class="t" style="left:288px;top:223.80px;font-size:15px;line-height:15px;color:#111;font-weight:700;width:110px;text-align:center;letter-spacing:0.5px">1.33</div><div class="t" style="left:383px;top:216.47px;font-size:9.6px;line-height:9.6px;color:#464c63;font-weight:700;width:11px;text-align:right;text-shadow:0 0 2px rgba(255,255,255,.6);-webkit-text-stroke:0.35px #464c63">3</div><div class="t" style="left:399px;top:223.80px;font-size:15px;line-height:15px;color:#111;font-weight:700;width:110px;text-align:center;letter-spacing:0.5px">1.93</div><div class="t" style="left:494px;top:216.47px;font-size:9.6px;line-height:9.6px;color:#464c63;font-weight:700;width:11px;text-align:right;text-shadow:0 0 2px rgba(255,255,255,.6);-webkit-text-stroke:0.35px #464c63">3</div><div class="t" style="left:510px;top:223.80px;font-size:15px;line-height:15px;color:#111;font-weight:700;width:110px;text-align:center;letter-spacing:0.5px">3.72</div><div class="t" style="left:605px;top:216.47px;font-size:9.6px;line-height:9.6px;color:#464c63;font-weight:700;width:11px;text-align:right;text-shadow:0 0 2px rgba(255,255,255,.6);-webkit-text-stroke:0.35px #464c63">1</div><div class="t" style="left:621px;top:223.80px;font-size:15px;line-height:15px;color:#111;font-weight:700;width:110px;text-align:center;letter-spacing:0.5px">3.72</div><div class="t" style="left:716px;top:216.47px;font-size:9.6px;line-height:9.6px;color:#464c63;font-weight:700;width:11px;text-align:right;text-shadow:0 0 2px rgba(255,255,255,.6);-webkit-text-stroke:0.35px #464c63">1</div><div class="t" style="left:732px;top:223.80px;font-size:15px;line-height:15px;color:#111;font-weight:700;width:110px;text-align:center;letter-spacing:0.5px">3.86</div><div class="t" style="left:827px;top:216.47px;font-size:9.6px;line-height:9.6px;color:#464c63;font-weight:700;width:11px;text-align:right;text-shadow:0 0 2px rgba(255,255,255,.6);-webkit-text-stroke:0.35px #464c63">2</div><div class="t" style="left:843px;top:223.80px;font-size:15px;line-height:15px;color:#111;font-weight:700;width:110px;text-align:center;letter-spacing:0.5px">2.99</div><div class="t" style="left:938px;top:216.47px;font-size:9.6px;line-height:9.6px;color:#464c63;font-weight:700;width:11px;text-align:right;text-shadow:0 0 2px rgba(255,255,255,.6);-webkit-text-stroke:0.35px #464c63">3</div><div style="position:absolute;left:1px;top:253px;width:175px;height:41px;background:#fff"></div><div style="position:absolute;left:0px;top:294px;width:176px;height:1px;background:#dcdcdc"></div><div style="position:absolute;left:176px;top:253px;width:1px;height:42px;background:#e4dde6"></div><svg style="position:absolute;left:6px;top:257px" width="35" height="32" viewBox="0 0 35 32"><rect width="35" height="32" fill="#dcf97f"/><path d="M0 7.30L1 7.70L2 8.69L3 9.78L4 10.44L5 10.34L6 9.53L7 8.41L8 7.53L9 7.33L10 7.90L11 8.97L12 10.01L13 10.49L14 10.19L15 9.26L16 8.14L17 7.40L18 7.40L19 8.14L20 9.26L21 10.19L22 10.49L23 10.01L24 8.97L25 7.90L26 7.33L27 7.53L28 8.41L29 9.53L30 10.34L31 10.44L32 9.78L33 8.69L34 7.70L35 7.30V32H0Z" fill="#9896c8"/><path d="M0 16.70L1 17.10L2 18.09L3 19.18L4 19.84L5 19.74L6 18.93L7 17.81L8 16.93L9 16.73L10 17.30L11 18.37L12 19.41L13 19.89L14 19.59L15 18.66L16 17.54L17 16.80L18 16.80L19 17.54L20 18.66L21 19.59L22 19.89L23 19.41L24 18.37L25 17.30L26 16.73L27 16.93L28 17.81L29 18.93L30 19.74L31 19.84L32 19.18L33 18.09L34 17.10L35 16.70V32H0Z" fill="#154f7c"/></svg><div class="t" style="left:46px;top:265.89px;font-size:12.3px;line-height:12.3px;color:#3f73b4;font-weight:400;text-align:left;-webkit-text-stroke:0.2px #3f73b4;transform:scaleX(0.95);transform-origin:0 0">Griffin, Kevin</div><div style="position:absolute;left:177px;top:253px;width:111px;height:42px;background:#a3d78b"></div><div style="position:absolute;left:288px;top:253px;width:111px;height:42px;background:#a3d78b"></div><div style="position:absolute;left:399px;top:253px;width:111px;height:42px;background:#a3d78b"></div><div style="position:absolute;left:510px;top:253px;width:111px;height:42px;background:#a3d78b"></div><div style="position:absolute;left:621px;top:253px;width:111px;height:42px;background:#a3d78b"></div><div style="position:absolute;left:732px;top:253px;width:111px;height:42px;background:#a3d78b"></div><div style="position:absolute;left:843px;top:253px;width:111px;height:42px;background:#a3d78b"></div><div style="position:absolute;left:954px;top:253px;width:111px;height:42px;background:#a3d78b"></div><div style="position:absolute;left:287px;top:253px;width:1px;height:42px;background:#6dbe4f"></div><div style="position:absolute;left:177px;top:294px;width:111px;height:1px;background:#6dbe4f"></div><div style="position:absolute;left:398px;top:253px;width:1px;height:42px;background:#6dbe4f"></div><div style="position:absolute;left:288px;top:294px;width:111px;height:1px;background:#6dbe4f"></div><div style="position:absolute;left:509px;top:253px;width:1px;height:42px;background:#6dbe4f"></div><div style="position:absolute;left:399px;top:294px;width:111px;height:1px;background:#6dbe4f"></div><div style="position:absolute;left:620px;top:253px;width:1px;height:42px;background:#6dbe4f"></div><div style="position:absolute;left:510px;top:294px;width:111px;height:1px;background:#6dbe4f"></div><div style="position:absolute;left:731px;top:253px;width:1px;height:42px;background:#6dbe4f"></div><div style="position:absolute;left:621px;top:294px;width:111px;height:1px;background:#6dbe4f"></div><div style="position:absolute;left:842px;top:253px;width:1px;height:42px;background:#6dbe4f"></div><div style="position:absolute;left:732px;top:294px;width:111px;height:1px;background:#6dbe4f"></div><div style="position:absolute;left:953px;top:253px;width:1px;height:42px;background:#6dbe4f"></div><div style="position:absolute;left:843px;top:294px;width:111px;height:1px;background:#6dbe4f"></div><div style="position:absolute;left:1064px;top:253px;width:1px;height:42px;background:#6dbe4f"></div><div style="position:absolute;left:954px;top:294px;width:111px;height:1px;background:#6dbe4f"></div><div style="position:absolute;left:181px;top:264px"><svg class="st" width="18" height="17" viewBox="0 0 18 17"><path d="M9.20 1.50L11.49 5.84L16.33 6.68L12.91 10.21L13.61 15.07L9.20 12.90L4.79 15.07L5.49 10.21L2.07 6.68L6.91 5.84Z" fill="#addd9e" stroke="#5aae4a" stroke-width="1.0" stroke-linejoin="round"/></svg></div><div class="t" style="left:177px;top:264.80px;font-size:15px;line-height:15px;color:#111;font-weight:700;width:110px;text-align:center;letter-spacing:0.5px">3.44</div><div class="t" style="left:272px;top:258.47px;font-size:9.6px;line-height:9.6px;color:#464c63;font-weight:700;width:11px;text-align:right;text-shadow:0 0 2px rgba(255,255,255,.6);-webkit-text-stroke:0.35px #464c63">4</div><div style="position:absolute;left:292px;top:264px"><svg class="st" width="18" height="17" viewBox="0 0 18 17"><path d="M9.20 1.50L11.49 5.84L16.33 6.68L12.91 10.21L13.61 15.07L9.20 12.90L4.79 15.07L5.49 10.21L2.07 6.68L6.91 5.84Z" fill="#addd9e" stroke="#5aae4a" stroke-width="1.0" stroke-linejoin="round"/></svg></div><div class="t" style="left:288px;top:264.80px;font-size:15px;line-height:15px;color:#111;font-weight:700;width:110px;text-align:center;letter-spacing:0.5px">3.47</div><div class="t" style="left:383px;top:258.47px;font-size:9.6px;line-height:9.6px;color:#464c63;font-weight:700;width:11px;text-align:right;text-shadow:0 0 2px rgba(255,255,255,.6);-webkit-text-stroke:0.35px #464c63">3</div><div style="position:absolute;left:403px;top:264px"><svg class="st" width="18" height="17" viewBox="0 0 18 17"><path d="M9.20 1.50L11.49 5.84L16.33 6.68L12.91 10.21L13.61 15.07L9.20 12.90L4.79 15.07L5.49 10.21L2.07 6.68L6.91 5.84Z" fill="#addd9e" stroke="#5aae4a" stroke-width="1.0" stroke-linejoin="round"/></svg></div><div class="t" style="left:399px;top:264.80px;font-size:15px;line-height:15px;color:#111;font-weight:700;width:110px;text-align:center;letter-spacing:0.5px">3.56</div><div class="t" style="left:494px;top:258.47px;font-size:9.6px;line-height:9.6px;color:#464c63;font-weight:700;width:11px;text-align:right;text-shadow:0 0 2px rgba(255,255,255,.6);-webkit-text-stroke:0.35px #464c63">3</div><div class="t" style="left:510px;top:265.80px;font-size:15px;line-height:15px;color:#111;font-weight:700;width:110px;text-align:center;letter-spacing:0.5px">3.44</div><div class="t" style="left:605px;top:258.47px;font-size:9.6px;line-height:9.6px;color:#464c63;font-weight:700;width:11px;text-align:right;text-shadow:0 0 2px rgba(255,255,255,.6);-webkit-text-stroke:0.35px #464c63">1</div><div class="t" style="left:621px;top:265.80px;font-size:15px;line-height:15px;color:#111;font-weight:700;width:110px;text-align:center;letter-spacing:0.5px">3.44</div><div class="t" style="left:716px;top:258.47px;font-size:9.6px;line-height:9.6px;color:#464c63;font-weight:700;width:11px;text-align:right;text-shadow:0 0 2px rgba(255,255,255,.6);-webkit-text-stroke:0.35px #464c63">1</div><div class="t" style="left:732px;top:265.80px;font-size:15px;line-height:15px;color:#111;font-weight:700;width:110px;text-align:center;letter-spacing:0.5px">3.52</div><div class="t" style="left:827px;top:258.47px;font-size:9.6px;line-height:9.6px;color:#464c63;font-weight:700;width:11px;text-align:right;text-shadow:0 0 2px rgba(255,255,255,.6);-webkit-text-stroke:0.35px #464c63">2</div><div style="position:absolute;left:847px;top:264px"><svg class="st" width="18" height="17" viewBox="0 0 18 17"><path d="M9.20 1.50L11.49 5.84L16.33 6.68L12.91 10.21L13.61 15.07L9.20 12.90L4.79 15.07L5.49 10.21L2.07 6.68L6.91 5.84Z" fill="#addd9e" stroke="#5aae4a" stroke-width="1.0" stroke-linejoin="round"/></svg></div><div class="t" style="left:843px;top:264.80px;font-size:15px;line-height:15px;color:#111;font-weight:700;width:110px;text-align:center;letter-spacing:0.5px">3.37</div><div class="t" style="left:938px;top:258.47px;font-size:9.6px;line-height:9.6px;color:#464c63;font-weight:700;width:11px;text-align:right;text-shadow:0 0 2px rgba(255,255,255,.6);-webkit-text-stroke:0.35px #464c63">3</div><div style="position:absolute;left:1px;top:295px;width:175px;height:41px;background:#f8f8f8"></div><div style="position:absolute;left:0px;top:336px;width:176px;height:1px;background:#dcdcdc"></div><div style="position:absolute;left:176px;top:295px;width:1px;height:42px;background:#e4dde6"></div><svg style="position:absolute;left:6px;top:299px" width="35" height="32" viewBox="0 0 35 32"><rect width="35" height="32" fill="#154f7c"/><path d="M0 0H6.9L0 7.7Z" fill="#49a9d9"/><path d="M0 21.2L11.6 9.2L15.4 12.7L0 28Z" fill="#5bc0eb"/><path d="M28.3 6.9L32 10.4L13.9 32H6.9Z" fill="#dcfb7f"/><path d="M16.2 3.6L19.2 0H25.9L20 6.9Z" fill="#dcfb7f"/><path d="M25.3 23.6L35 13.5V20.9L28.6 27.1Z" fill="#49a9d9"/><path d="M18.6 32L21.5 28.4L25.3 32Z" fill="#dcfb7f"/></svg><div class="t" style="left:46px;top:307.89px;font-size:12.3px;line-height:12.3px;color:#3f73b4;font-weight:400;text-align:left;-webkit-text-stroke:0.2px #3f73b4;transform:scaleX(0.95);transform-origin:0 0">McKenzie, Sean</div><div style="position:absolute;left:177px;top:295px;width:111px;height:42px;background:#a3d78b"></div><div style="position:absolute;left:288px;top:295px;width:111px;height:42px;background:#a3d78b"></div><div style="position:absolute;left:399px;top:295px;width:111px;height:42px;background:#a3d78b"></div><div style="position:absolute;left:510px;top:295px;width:111px;height:42px;background:#a3d78b"></div><div style="position:absolute;left:621px;top:295px;width:111px;height:42px;background:#a3d78b"></div><div style="position:absolute;left:732px;top:295px;width:111px;height:42px;background:#a3d78b"></div><div style="position:absolute;left:843px;top:295px;width:111px;height:42px;background:#a3d78b"></div><div style="position:absolute;left:954px;top:295px;width:111px;height:42px;background:#c0e3ad"></div><div style="position:absolute;left:287px;top:295px;width:1px;height:42px;background:#6dbe4f"></div><div style="position:absolute;left:177px;top:336px;width:111px;height:1px;background:#6dbe4f"></div><div style="position:absolute;left:398px;top:295px;width:1px;height:42px;background:#6dbe4f"></div><div style="position:absolute;left:288px;top:336px;width:111px;height:1px;background:#6dbe4f"></div><div style="position:absolute;left:509px;top:295px;width:1px;height:42px;background:#6dbe4f"></div><div style="position:absolute;left:399px;top:336px;width:111px;height:1px;background:#6dbe4f"></div><div style="position:absolute;left:620px;top:295px;width:1px;height:42px;background:#6dbe4f"></div><div style="position:absolute;left:510px;top:336px;width:111px;height:1px;background:#6dbe4f"></div><div style="position:absolute;left:731px;top:295px;width:1px;height:42px;background:#6dbe4f"></div><div style="position:absolute;left:621px;top:336px;width:111px;height:1px;background:#6dbe4f"></div><div style="position:absolute;left:842px;top:295px;width:1px;height:42px;background:#6dbe4f"></div><div style="position:absolute;left:732px;top:336px;width:111px;height:1px;background:#6dbe4f"></div><div style="position:absolute;left:953px;top:295px;width:1px;height:42px;background:#6dbe4f"></div><div style="position:absolute;left:843px;top:336px;width:111px;height:1px;background:#6dbe4f"></div><div style="position:absolute;left:1064px;top:295px;width:1px;height:42px;background:#6dbe4f"></div><div style="position:absolute;left:954px;top:336px;width:111px;height:1px;background:#6dbe4f"></div><div style="position:absolute;left:181px;top:306px"><svg class="st" width="18" height="17" viewBox="0 0 18 17"><path d="M9.20 1.50L11.49 5.84L16.33 6.68L12.91 10.21L13.61 15.07L9.20 12.90L4.79 15.07L5.49 10.21L2.07 6.68L6.91 5.84Z" fill="#addd9e" stroke="#5aae4a" stroke-width="1.0" stroke-linejoin="round"/></svg></div><div class="t" style="left:177px;top:306.80px;font-size:15px;line-height:15px;color:#111;font-weight:700;width:110px;text-align:center;letter-spacing:0.5px">3.3</div><div class="t" style="left:272px;top:300.47px;font-size:9.6px;line-height:9.6px;color:#464c63;font-weight:700;width:11px;text-align:right;text-shadow:0 0 2px rgba(255,255,255,.6);-webkit-text-stroke:0.35px #464c63">4</div><div style="position:absolute;left:292px;top:306px"><svg class="st" width="18" height="17" viewBox="0 0 18 17"><path d="M9.20 1.50L11.49 5.84L16.33 6.68L12.91 10.21L13.61 15.07L9.20 12.90L4.79 15.07L5.49 10.21L2.07 6.68L6.91 5.84Z" fill="#addd9e" stroke="#5aae4a" stroke-width="1.0" stroke-linejoin="round"/></svg></div><div class="t" style="left:288px;top:306.80px;font-size:15px;line-height:15px;color:#111;font-weight:700;width:110px;text-align:center;letter-spacing:0.5px">3.43</div><div class="t" style="left:383px;top:300.47px;font-size:9.6px;line-height:9.6px;color:#464c63;font-weight:700;width:11px;text-align:right;text-shadow:0 0 2px rgba(255,255,255,.6);-webkit-text-stroke:0.35px #464c63">3</div><div style="position:absolute;left:403px;top:306px"><svg class="st" width="18" height="17" viewBox="0 0 18 17"><path d="M9.20 1.50L11.49 5.84L16.33 6.68L12.91 10.21L13.61 15.07L9.20 12.90L4.79 15.07L5.49 10.21L2.07 6.68L6.91 5.84Z" fill="#addd9e" stroke="#5aae4a" stroke-width="1.0" stroke-linejoin="round"/></svg></div><div class="t" style="left:399px;top:306.80px;font-size:15px;line-height:15px;color:#111;font-weight:700;width:110px;text-align:center;letter-spacing:0.5px">3.55</div><div class="t" style="left:494px;top:300.47px;font-size:9.6px;line-height:9.6px;color:#464c63;font-weight:700;width:11px;text-align:right;text-shadow:0 0 2px rgba(255,255,255,.6);-webkit-text-stroke:0.35px #464c63">3</div><div class="t" style="left:510px;top:307.80px;font-size:15px;line-height:15px;color:#111;font-weight:700;width:110px;text-align:center;letter-spacing:0.5px">3.48</div><div class="t" style="left:605px;top:300.47px;font-size:9.6px;line-height:9.6px;color:#464c63;font-weight:700;width:11px;text-align:right;text-shadow:0 0 2px rgba(255,255,255,.6);-webkit-text-stroke:0.35px #464c63">1</div><div class="t" style="left:621px;top:307.80px;font-size:15px;line-height:15px;color:#111;font-weight:700;width:110px;text-align:center;letter-spacing:0.5px">3.48</div><div class="t" style="left:716px;top:300.47px;font-size:9.6px;line-height:9.6px;color:#464c63;font-weight:700;width:11px;text-align:right;text-shadow:0 0 2px rgba(255,255,255,.6);-webkit-text-stroke:0.35px #464c63">1</div><div class="t" style="left:732px;top:307.80px;font-size:15px;line-height:15px;color:#111;font-weight:700;width:110px;text-align:center;letter-spacing:0.5px">3.52</div><div class="t" style="left:827px;top:300.47px;font-size:9.6px;line-height:9.6px;color:#464c63;font-weight:700;width:11px;text-align:right;text-shadow:0 0 2px rgba(255,255,255,.6);-webkit-text-stroke:0.35px #464c63">2</div><div style="position:absolute;left:847px;top:306px"><svg class="st" width="18" height="17" viewBox="0 0 18 17"><path d="M9.20 1.50L11.49 5.84L16.33 6.68L12.91 10.21L13.61 15.07L9.20 12.90L4.79 15.07L5.49 10.21L2.07 6.68L6.91 5.84Z" fill="#addd9e" stroke="#5aae4a" stroke-width="1.0" stroke-linejoin="round"/></svg></div><div class="t" style="left:843px;top:306.80px;font-size:15px;line-height:15px;color:#111;font-weight:700;width:110px;text-align:center;letter-spacing:0.5px">3.12</div><div class="t" style="left:938px;top:300.47px;font-size:9.6px;line-height:9.6px;color:#464c63;font-weight:700;width:11px;text-align:right;text-shadow:0 0 2px rgba(255,255,255,.6);-webkit-text-stroke:0.35px #464c63">3</div><div style="position:absolute;left:1px;top:337px;width:175px;height:41px;background:#fff"></div><div style="position:absolute;left:0px;top:378px;width:176px;height:1px;background:#dcdcdc"></div><div style="position:absolute;left:176px;top:337px;width:1px;height:42px;background:#e4dde6"></div><svg style="position:absolute;left:6px;top:341px" width="35" height="32" viewBox="0 0 35 32"><rect width="17.3" height="17.8" fill="#dcf97f"/><rect x="17.3" width="17.7" height="17.8" fill="#5bc0eb"/><rect y="17.8" width="17.3" height="14.2" fill="#9596c8"/><rect x="17.3" y="17.8" width="17.7" height="14.2" fill="#f5c42a"/><clipPath id="cs"><circle cx="17.3" cy="17.3" r="11.9"/></clipPath><g clip-path="url(#cs)"><rect width="17.3" height="17.8" fill="#8db470"/><rect x="17.3" width="17.7" height="17.8" fill="#3a8ec4"/><rect y="17.8" width="17.3" height="14.2" fill="#5b6aa0"/><rect x="17.3" y="17.8" width="17.7" height="14.2" fill="#a08f2a"/></g></svg><div class="t" style="left:46px;top:349.89px;font-size:12.3px;line-height:12.3px;color:#3f73b4;font-weight:400;text-align:left;-webkit-text-stroke:0.2px #3f73b4;transform:scaleX(0.95);transform-origin:0 0">Stormtrooper, Finn</div><div style="position:absolute;left:177px;top:337px;width:111px;height:42px;background:#a3d78b"></div><div style="position:absolute;left:288px;top:337px;width:111px;height:42px;background:#a3d78b"></div><div style="position:absolute;left:399px;top:337px;width:111px;height:42px;background:#a3d78b"></div><div style="position:absolute;left:510px;top:337px;width:111px;height:42px;background:#a3d78b"></div><div style="position:absolute;left:621px;top:337px;width:111px;height:42px;background:#a3d78b"></div><div style="position:absolute;left:732px;top:337px;width:111px;height:42px;background:#a3d78b"></div><div style="position:absolute;left:843px;top:337px;width:111px;height:42px;background:#a3d78b"></div><div style="position:absolute;left:954px;top:337px;width:111px;height:42px;background:#a3d78b"></div><div style="position:absolute;left:287px;top:337px;width:1px;height:42px;background:#6dbe4f"></div><div style="position:absolute;left:177px;top:378px;width:111px;height:1px;background:#6dbe4f"></div><div style="position:absolute;left:398px;top:337px;width:1px;height:42px;background:#6dbe4f"></div><div style="position:absolute;left:288px;top:378px;width:111px;height:1px;background:#6dbe4f"></div><div style="position:absolute;left:509px;top:337px;width:1px;height:42px;background:#6dbe4f"></div><div style="position:absolute;left:399px;top:378px;width:111px;height:1px;background:#6dbe4f"></div><div style="position:absolute;left:620px;top:337px;width:1px;height:42px;background:#6dbe4f"></div><div style="position:absolute;left:510px;top:378px;width:111px;height:1px;background:#6dbe4f"></div><div style="position:absolute;left:731px;top:337px;width:1px;height:42px;background:#6dbe4f"></div><div style="position:absolute;left:621px;top:378px;width:111px;height:1px;background:#6dbe4f"></div><div style="position:absolute;left:842px;top:337px;width:1px;height:42px;background:#6dbe4f"></div><div style="position:absolute;left:732px;top:378px;width:111px;height:1px;background:#6dbe4f"></div><div style="position:absolute;left:953px;top:337px;width:1px;height:42px;background:#6dbe4f"></div><div style="position:absolute;left:843px;top:378px;width:111px;height:1px;background:#6dbe4f"></div><div style="position:absolute;left:1064px;top:337px;width:1px;height:42px;background:#6dbe4f"></div><div style="position:absolute;left:954px;top:378px;width:111px;height:1px;background:#6dbe4f"></div><div style="position:absolute;left:181px;top:348px"><svg class="st" width="18" height="17" viewBox="0 0 18 17"><path d="M9.20 1.50L11.49 5.84L16.33 6.68L12.91 10.21L13.61 15.07L9.20 12.90L4.79 15.07L5.49 10.21L2.07 6.68L6.91 5.84Z" fill="#addd9e" stroke="#5aae4a" stroke-width="1.0" stroke-linejoin="round"/></svg></div><div class="t" style="left:177px;top:348.80px;font-size:15px;line-height:15px;color:#111;font-weight:700;width:110px;text-align:center;letter-spacing:0.5px">3.66</div><div class="t" style="left:272px;top:342.47px;font-size:9.6px;line-height:9.6px;color:#464c63;font-weight:700;width:11px;text-align:right;text-shadow:0 0 2px rgba(255,255,255,.6);-webkit-text-stroke:0.35px #464c63">4</div><div style="position:absolute;left:292px;top:348px"><svg class="st" width="18" height="17" viewBox="0 0 18 17"><path d="M9.20 1.50L11.49 5.84L16.33 6.68L12.91 10.21L13.61 15.07L9.20 12.90L4.79 15.07L5.49 10.21L2.07 6.68L6.91 5.84Z" fill="#addd9e" stroke="#5aae4a" stroke-width="1.0" stroke-linejoin="round"/></svg></div><div class="t" style="left:288px;top:348.80px;font-size:15px;line-height:15px;color:#111;font-weight:700;width:110px;text-align:center;letter-spacing:0.5px">3.81</div><div class="t" style="left:383px;top:342.47px;font-size:9.6px;line-height:9.6px;color:#464c63;font-weight:700;width:11px;text-align:right;text-shadow:0 0 2px rgba(255,255,255,.6);-webkit-text-stroke:0.35px #464c63">3</div><div style="position:absolute;left:403px;top:348px"><svg class="st" width="18" height="17" viewBox="0 0 18 17"><path d="M9.20 1.50L11.49 5.84L16.33 6.68L12.91 10.21L13.61 15.07L9.20 12.90L4.79 15.07L5.49 10.21L2.07 6.68L6.91 5.84Z" fill="#addd9e" stroke="#5aae4a" stroke-width="1.0" stroke-linejoin="round"/></svg></div><div class="t" style="left:399px;top:348.80px;font-size:15px;line-height:15px;color:#111;font-weight:700;width:110px;text-align:center;letter-spacing:0.5px">3.79</div><div class="t" style="left:494px;top:342.47px;font-size:9.6px;line-height:9.6px;color:#464c63;font-weight:700;width:11px;text-align:right;text-shadow:0 0 2px rgba(255,255,255,.6);-webkit-text-stroke:0.35px #464c63">3</div><div class="t" style="left:510px;top:349.80px;font-size:15px;line-height:15px;color:#111;font-weight:700;width:110px;text-align:center;letter-spacing:0.5px">3.8</div><div class="t" style="left:605px;top:342.47px;font-size:9.6px;line-height:9.6px;color:#464c63;font-weight:700;width:11px;text-align:right;text-shadow:0 0 2px rgba(255,255,255,.6);-webkit-text-stroke:0.35px #464c63">1</div><div class="t" style="left:621px;top:349.80px;font-size:15px;line-height:15px;color:#111;font-weight:700;width:110px;text-align:center;letter-spacing:0.5px">3.8</div><div class="t" style="left:716px;top:342.47px;font-size:9.6px;line-height:9.6px;color:#464c63;font-weight:700;width:11px;text-align:right;text-shadow:0 0 2px rgba(255,255,255,.6);-webkit-text-stroke:0.35px #464c63">1</div><div class="t" style="left:732px;top:349.80px;font-size:15px;line-height:15px;color:#111;font-weight:700;width:110px;text-align:center;letter-spacing:0.5px">3.76</div><div class="t" style="left:827px;top:342.47px;font-size:9.6px;line-height:9.6px;color:#464c63;font-weight:700;width:11px;text-align:right;text-shadow:0 0 2px rgba(255,255,255,.6);-webkit-text-stroke:0.35px #464c63">2</div><div style="position:absolute;left:847px;top:348px"><svg class="st" width="18" height="17" viewBox="0 0 18 17"><path d="M9.20 1.50L11.49 5.84L16.33 6.68L12.91 10.21L13.61 15.07L9.20 12.90L4.79 15.07L5.49 10.21L2.07 6.68L6.91 5.84Z" fill="#addd9e" stroke="#5aae4a" stroke-width="1.0" stroke-linejoin="round"/></svg></div><div class="t" style="left:843px;top:348.80px;font-size:15px;line-height:15px;color:#111;font-weight:700;width:110px;text-align:center;letter-spacing:0.5px">3.57</div><div class="t" style="left:938px;top:342.47px;font-size:9.6px;line-height:9.6px;color:#464c63;font-weight:700;width:11px;text-align:right;text-shadow:0 0 2px rgba(255,255,255,.6);-webkit-text-stroke:0.35px #464c63">3</div><div style="position:absolute;left:1px;top:379px;width:175px;height:41px;background:#f8f8f8"></div><div style="position:absolute;left:0px;top:420px;width:176px;height:1px;background:#dcdcdc"></div><div style="position:absolute;left:176px;top:379px;width:1px;height:42px;background:#e4dde6"></div><svg style="position:absolute;left:6px;top:383px" width="35" height="32" viewBox="0 0 35 32"><rect width="35" height="32" fill="#9697ca"/><path d="M0 0A35 32 0 0 1 35 32H0Z" fill="#53559f"/><path d="M0 21.5H13.5V32H0Z" fill="#5cc3b4"/><path d="M0 21.5L13.5 32H0Z" fill="#9697ca"/></svg><div class="t" style="left:46px;top:391.89px;font-size:12.3px;line-height:12.3px;color:#3f73b4;font-weight:400;text-align:left;-webkit-text-stroke:0.2px #3f73b4;transform:scaleX(0.95);transform-origin:0 0">Taylor, Robyn</div><div style="position:absolute;left:177px;top:379px;width:111px;height:42px;background:#a3d78b"></div><div style="position:absolute;left:288px;top:379px;width:111px;height:42px;background:#a3d78b"></div><div style="position:absolute;left:399px;top:379px;width:111px;height:42px;background:#a3d78b"></div><div style="position:absolute;left:510px;top:379px;width:111px;height:42px;background:#a3d78b"></div><div style="position:absolute;left:621px;top:379px;width:111px;height:42px;background:#a3d78b"></div><div style="position:absolute;left:732px;top:379px;width:111px;height:42px;background:#a3d78b"></div><div style="position:absolute;left:843px;top:379px;width:111px;height:42px;background:#a3d78b"></div><div style="position:absolute;left:954px;top:379px;width:111px;height:42px;background:#c0e3ad"></div><div style="position:absolute;left:287px;top:379px;width:1px;height:42px;background:#6dbe4f"></div><div style="position:absolute;left:177px;top:420px;width:111px;height:1px;background:#6dbe4f"></div><div style="position:absolute;left:398px;top:379px;width:1px;height:42px;background:#6dbe4f"></div><div style="position:absolute;left:288px;top:420px;width:111px;height:1px;background:#6dbe4f"></div><div style="position:absolute;left:509px;top:379px;width:1px;height:42px;background:#6dbe4f"></div><div style="position:absolute;left:399px;top:420px;width:111px;height:1px;background:#6dbe4f"></div><div style="position:absolute;left:620px;top:379px;width:1px;height:42px;background:#6dbe4f"></div><div style="position:absolute;left:510px;top:420px;width:111px;height:1px;background:#6dbe4f"></div><div style="position:absolute;left:731px;top:379px;width:1px;height:42px;background:#6dbe4f"></div><div style="position:absolute;left:621px;top:420px;width:111px;height:1px;background:#6dbe4f"></div><div style="position:absolute;left:842px;top:379px;width:1px;height:42px;background:#6dbe4f"></div><div style="position:absolute;left:732px;top:420px;width:111px;height:1px;background:#6dbe4f"></div><div style="position:absolute;left:953px;top:379px;width:1px;height:42px;background:#6dbe4f"></div><div style="position:absolute;left:843px;top:420px;width:111px;height:1px;background:#6dbe4f"></div><div style="position:absolute;left:1064px;top:379px;width:1px;height:42px;background:#6dbe4f"></div><div style="position:absolute;left:954px;top:420px;width:111px;height:1px;background:#6dbe4f"></div><div style="position:absolute;left:181px;top:390px"><svg class="st" width="18" height="17" viewBox="0 0 18 17"><path d="M9.20 1.50L11.49 5.84L16.33 6.68L12.91 10.21L13.61 15.07L9.20 12.90L4.79 15.07L5.49 10.21L2.07 6.68L6.91 5.84Z" fill="#addd9e" stroke="#5aae4a" stroke-width="1.0" stroke-linejoin="round"/></svg></div><div class="t" style="left:177px;top:390.80px;font-size:15px;line-height:15px;color:#111;font-weight:700;width:110px;text-align:center;letter-spacing:0.5px">3.54</div><div class="t" style="left:272px;top:384.47px;font-size:9.6px;line-height:9.6px;color:#464c63;font-weight:700;width:11px;text-align:right;text-shadow:0 0 2px rgba(255,255,255,.6);-webkit-text-stroke:0.35px #464c63">4</div><div style="position:absolute;left:292px;top:390px"><svg class="st" width="18" height="17" viewBox="0 0 18 17"><path d="M9.20 1.50L11.49 5.84L16.33 6.68L12.91 10.21L13.61 15.07L9.20 12.90L4.79 15.07L5.49 10.21L2.07 6.68L6.91 5.84Z" fill="#addd9e" stroke="#5aae4a" stroke-width="1.0" stroke-linejoin="round"/></svg></div><div class="t" style="left:288px;top:390.80px;font-size:15px;line-height:15px;color:#111;font-weight:700;width:110px;text-align:center;letter-spacing:0.5px">3.93</div><div class="t" style="left:383px;top:384.47px;font-size:9.6px;line-height:9.6px;color:#464c63;font-weight:700;width:11px;text-align:right;text-shadow:0 0 2px rgba(255,255,255,.6);-webkit-text-stroke:0.35px #464c63">3</div><div style="position:absolute;left:403px;top:390px"><svg class="st" width="18" height="17" viewBox="0 0 18 17"><path d="M9.20 1.50L11.49 5.84L16.33 6.68L12.91 10.21L13.61 15.07L9.20 12.90L4.79 15.07L5.49 10.21L2.07 6.68L6.91 5.84Z" fill="#addd9e" stroke="#5aae4a" stroke-width="1.0" stroke-linejoin="round"/></svg></div><div class="t" style="left:399px;top:390.80px;font-size:15px;line-height:15px;color:#111;font-weight:700;width:110px;text-align:center;letter-spacing:0.5px">3.81</div><div class="t" style="left:494px;top:384.47px;font-size:9.6px;line-height:9.6px;color:#464c63;font-weight:700;width:11px;text-align:right;text-shadow:0 0 2px rgba(255,255,255,.6);-webkit-text-stroke:0.35px #464c63">3</div><div class="t" style="left:510px;top:391.80px;font-size:15px;line-height:15px;color:#111;font-weight:700;width:110px;text-align:center;letter-spacing:0.5px">3.76</div><div class="t" style="left:605px;top:384.47px;font-size:9.6px;line-height:9.6px;color:#464c63;font-weight:700;width:11px;text-align:right;text-shadow:0 0 2px rgba(255,255,255,.6);-webkit-text-stroke:0.35px #464c63">1</div><div class="t" style="left:621px;top:391.80px;font-size:15px;line-height:15px;color:#111;font-weight:700;width:110px;text-align:center;letter-spacing:0.5px">3.76</div><div class="t" style="left:716px;top:384.47px;font-size:9.6px;line-height:9.6px;color:#464c63;font-weight:700;width:11px;text-align:right;text-shadow:0 0 2px rgba(255,255,255,.6);-webkit-text-stroke:0.35px #464c63">1</div><div class="t" style="left:732px;top:391.80px;font-size:15px;line-height:15px;color:#111;font-weight:700;width:110px;text-align:center;letter-spacing:0.5px">3.82</div><div class="t" style="left:827px;top:384.47px;font-size:9.6px;line-height:9.6px;color:#464c63;font-weight:700;width:11px;text-align:right;text-shadow:0 0 2px rgba(255,255,255,.6);-webkit-text-stroke:0.35px #464c63">2</div><div style="position:absolute;left:847px;top:390px"><svg class="st" width="18" height="17" viewBox="0 0 18 17"><path d="M9.20 1.50L11.49 5.84L16.33 6.68L12.91 10.21L13.61 15.07L9.20 12.90L4.79 15.07L5.49 10.21L2.07 6.68L6.91 5.84Z" fill="#addd9e" stroke="#5aae4a" stroke-width="1.0" stroke-linejoin="round"/></svg></div><div class="t" style="left:843px;top:390.80px;font-size:15px;line-height:15px;color:#111;font-weight:700;width:110px;text-align:center;letter-spacing:0.5px">3.37</div><div class="t" style="left:938px;top:384.47px;font-size:9.6px;line-height:9.6px;color:#464c63;font-weight:700;width:11px;text-align:right;text-shadow:0 0 2px rgba(255,255,255,.6);-webkit-text-stroke:0.35px #464c63">3</div><div style="position:absolute;left:1px;top:421px;width:175px;height:41px;background:#fff"></div><div style="position:absolute;left:0px;top:462px;width:176px;height:1px;background:#dcdcdc"></div><div style="position:absolute;left:176px;top:421px;width:1px;height:42px;background:#e4dde6"></div><svg style="position:absolute;left:6px;top:425px" width="35" height="32" viewBox="0 0 35 32"><rect width="35" height="32" fill="#f5c42a"/><circle cx="17.5" cy="36" r="18.5" fill="#9595c8"/><path d="M8.9 12A8.5 8.5 0 0 0 25.9 12H21.9A4.5 4.5 0 0 1 12.9 12Z" fill="#dcfb7f"/><path d="M5.57 11.47A4.9 4.9 0 0 1 14.31 7.39" fill="none" stroke="#dcfb7f" stroke-width="3"/><path d="M13.53 31.34A7.2 7.2 0 0 1 27.50 33.80" fill="none" stroke="#dcfb7f" stroke-width="4.3"/></svg><div class="t" style="left:46px;top:433.89px;font-size:12.3px;line-height:12.3px;color:#3f73b4;font-weight:400;text-align:left;-webkit-text-stroke:0.2px #3f73b4;transform:scaleX(0.95);transform-origin:0 0">Thomas, Michael</div><div style="position:absolute;left:177px;top:421px;width:111px;height:42px;background:#a3d78b"></div><div style="position:absolute;left:288px;top:421px;width:111px;height:42px;background:#c0e3ad"></div><div style="position:absolute;left:399px;top:421px;width:111px;height:42px;background:#a3d78b"></div><div style="position:absolute;left:510px;top:421px;width:111px;height:42px;background:#a3d78b"></div><div style="position:absolute;left:621px;top:421px;width:111px;height:42px;background:#a3d78b"></div><div style="position:absolute;left:732px;top:421px;width:111px;height:42px;background:#a3d78b"></div><div style="position:absolute;left:843px;top:421px;width:111px;height:42px;background:#a3d78b"></div><div style="position:absolute;left:954px;top:421px;width:111px;height:42px;background:#a3d78b"></div><div style="position:absolute;left:287px;top:421px;width:1px;height:42px;background:#6dbe4f"></div><div style="position:absolute;left:177px;top:462px;width:111px;height:1px;background:#6dbe4f"></div><div style="position:absolute;left:398px;top:421px;width:1px;height:42px;background:#6dbe4f"></div><div style="position:absolute;left:288px;top:462px;width:111px;height:1px;background:#6dbe4f"></div><div style="position:absolute;left:509px;top:421px;width:1px;height:42px;background:#6dbe4f"></div><div style="position:absolute;left:399px;top:462px;width:111px;height:1px;background:#6dbe4f"></div><div style="position:absolute;left:620px;top:421px;width:1px;height:42px;background:#6dbe4f"></div><div style="position:absolute;left:510px;top:462px;width:111px;height:1px;background:#6dbe4f"></div><div style="position:absolute;left:731px;top:421px;width:1px;height:42px;background:#6dbe4f"></div><div style="position:absolute;left:621px;top:462px;width:111px;height:1px;background:#6dbe4f"></div><div style="position:absolute;left:842px;top:421px;width:1px;height:42px;background:#6dbe4f"></div><div style="position:absolute;left:732px;top:462px;width:111px;height:1px;background:#6dbe4f"></div><div style="position:absolute;left:953px;top:421px;width:1px;height:42px;background:#6dbe4f"></div><div style="position:absolute;left:843px;top:462px;width:111px;height:1px;background:#6dbe4f"></div><div style="position:absolute;left:1064px;top:421px;width:1px;height:42px;background:#6dbe4f"></div><div style="position:absolute;left:954px;top:462px;width:111px;height:1px;background:#6dbe4f"></div><div style="position:absolute;left:181px;top:432px"><svg class="st" width="18" height="17" viewBox="0 0 18 17"><path d="M9.20 1.50L11.49 5.84L16.33 6.68L12.91 10.21L13.61 15.07L9.20 12.90L4.79 15.07L5.49 10.21L2.07 6.68L6.91 5.84Z" fill="#addd9e" stroke="#5aae4a" stroke-width="1.0" stroke-linejoin="round"/></svg></div><div class="t" style="left:177px;top:432.80px;font-size:15px;line-height:15px;color:#111;font-weight:700;width:110px;text-align:center;letter-spacing:0.5px">3.29</div><div class="t" style="left:272px;top:426.47px;font-size:9.6px;line-height:9.6px;color:#464c63;font-weight:700;width:11px;text-align:right;text-shadow:0 0 2px rgba(255,255,255,.6);-webkit-text-stroke:0.35px #464c63">4</div><div class="t" style="left:288px;top:433.80px;font-size:15px;line-height:15px;color:#111;font-weight:700;width:110px;text-align:center;letter-spacing:0.5px">2.54</div><div class="t" style="left:383px;top:426.47px;font-size:9.6px;line-height:9.6px;color:#464c63;font-weight:700;width:11px;text-align:right;text-shadow:0 0 2px rgba(255,255,255,.6);-webkit-text-stroke:0.35px #464c63">2</div><div style="position:absolute;left:403px;top:432px"><svg class="st" width="18" height="17" viewBox="0 0 18 17"><path d="M9.20 1.50L11.49 5.84L16.33 6.68L12.91 10.21L13.61 15.07L9.20 12.90L4.79 15.07L5.49 10.21L2.07 6.68L6.91 5.84Z" fill="#addd9e" stroke="#5aae4a" stroke-width="1.0" stroke-linejoin="round"/></svg></div><div class="t" style="left:399px;top:432.80px;font-size:15px;line-height:15px;color:#111;font-weight:700;width:110px;text-align:center;letter-spacing:0.5px">3.24</div><div class="t" style="left:494px;top:426.47px;font-size:9.6px;line-height:9.6px;color:#464c63;font-weight:700;width:11px;text-align:right;text-shadow:0 0 2px rgba(255,255,255,.6);-webkit-text-stroke:0.35px #464c63">3</div><div class="t" style="left:510px;top:433.80px;font-size:15px;line-height:15px;color:#111;font-weight:700;width:110px;text-align:center;letter-spacing:0.5px">3.56</div><div class="t" style="left:605px;top:426.47px;font-size:9.6px;line-height:9.6px;color:#464c63;font-weight:700;width:11px;text-align:right;text-shadow:0 0 2px rgba(255,255,255,.6);-webkit-text-stroke:0.35px #464c63">1</div><div class="t" style="left:621px;top:433.80px;font-size:15px;line-height:15px;color:#111;font-weight:700;width:110px;text-align:center;letter-spacing:0.5px">3.56</div><div class="t" style="left:716px;top:426.47px;font-size:9.6px;line-height:9.6px;color:#464c63;font-weight:700;width:11px;text-align:right;text-shadow:0 0 2px rgba(255,255,255,.6);-webkit-text-stroke:0.35px #464c63">1</div><div class="t" style="left:732px;top:433.80px;font-size:15px;line-height:15px;color:#111;font-weight:700;width:110px;text-align:center;letter-spacing:0.5px">3.52</div><div class="t" style="left:827px;top:426.47px;font-size:9.6px;line-height:9.6px;color:#464c63;font-weight:700;width:11px;text-align:right;text-shadow:0 0 2px rgba(255,255,255,.6);-webkit-text-stroke:0.35px #464c63">2</div><div style="position:absolute;left:847px;top:432px"><svg class="st" width="18" height="17" viewBox="0 0 18 17"><path d="M9.20 1.50L11.49 5.84L16.33 6.68L12.91 10.21L13.61 15.07L9.20 12.90L4.79 15.07L5.49 10.21L2.07 6.68L6.91 5.84Z" fill="#addd9e" stroke="#5aae4a" stroke-width="1.0" stroke-linejoin="round"/></svg></div><div class="t" style="left:843px;top:432.80px;font-size:15px;line-height:15px;color:#111;font-weight:700;width:110px;text-align:center;letter-spacing:0.5px">3.51</div><div class="t" style="left:938px;top:426.47px;font-size:9.6px;line-height:9.6px;color:#464c63;font-weight:700;width:11px;text-align:right;text-shadow:0 0 2px rgba(255,255,255,.6);-webkit-text-stroke:0.35px #464c63">3</div><div style="position:absolute;left:1px;top:463px;width:175px;height:41px;background:#f8f8f8"></div><div style="position:absolute;left:0px;top:504px;width:176px;height:1px;background:#dcdcdc"></div><div style="position:absolute;left:176px;top:463px;width:1px;height:42px;background:#e4dde6"></div><svg style="position:absolute;left:6px;top:467px" width="35" height="32" viewBox="0 0 35 32"><rect width="35" height="32" fill="#e97a78"/><path d="M0 0L16.8 16.8L2.9 32H0Z" fill="#7a655d"/><path d="M35 0.3V32H2.9Z" fill="#5bc3b7"/><g fill="#dcfb7f"><rect x="16.8" y="0" width="1.3" height="29.9"/><rect x="21.8" y="0" width="1.3" height="29.9"/><rect x="26.8" y="0" width="1.3" height="29.9"/></g><g fill="#dcfb7f" opacity="0.45"><rect x="19.2" y="0" width="1.8" height="29.9"/><rect x="24.2" y="0" width="1.8" height="29.9"/><rect x="29.2" y="0" width="1.8" height="29.9"/></g></svg><div class="t" style="left:46px;top:475.89px;font-size:12.3px;line-height:12.3px;color:#3f73b4;font-weight:400;text-align:left;-webkit-text-stroke:0.2px #3f73b4;transform:scaleX(0.95);transform-origin:0 0">White, Tyrell</div><div style="position:absolute;left:177px;top:463px;width:111px;height:42px;background:#a3d78b"></div><div style="position:absolute;left:288px;top:463px;width:111px;height:42px;background:#a3d78b"></div><div style="position:absolute;left:399px;top:463px;width:111px;height:42px;background:#a3d78b"></div><div style="position:absolute;left:510px;top:463px;width:111px;height:42px;background:#a3d78b"></div><div style="position:absolute;left:621px;top:463px;width:111px;height:42px;background:#a3d78b"></div><div style="position:absolute;left:732px;top:463px;width:111px;height:42px;background:#a3d78b"></div><div style="position:absolute;left:843px;top:463px;width:111px;height:42px;background:#a3d78b"></div><div style="position:absolute;left:954px;top:463px;width:111px;height:42px;background:#a3d78b"></div><div style="position:absolute;left:287px;top:463px;width:1px;height:42px;background:#6dbe4f"></div><div style="position:absolute;left:177px;top:504px;width:111px;height:1px;background:#6dbe4f"></div><div style="position:absolute;left:398px;top:463px;width:1px;height:42px;background:#6dbe4f"></div><div style="position:absolute;left:288px;top:504px;width:111px;height:1px;background:#6dbe4f"></div><div style="position:absolute;left:509px;top:463px;width:1px;height:42px;background:#6dbe4f"></div><div style="position:absolute;left:399px;top:504px;width:111px;height:1px;background:#6dbe4f"></div><div style="position:absolute;left:620px;top:463px;width:1px;height:42px;background:#6dbe4f"></div><div style="position:absolute;left:510px;top:504px;width:111px;height:1px;background:#6dbe4f"></div><div style="position:absolute;left:731px;top:463px;width:1px;height:42px;background:#6dbe4f"></div><div style="position:absolute;left:621px;top:504px;width:111px;height:1px;background:#6dbe4f"></div><div style="position:absolute;left:842px;top:463px;width:1px;height:42px;background:#6dbe4f"></div><div style="position:absolute;left:732px;top:504px;width:111px;height:1px;background:#6dbe4f"></div><div style="position:absolute;left:953px;top:463px;width:1px;height:42px;background:#6dbe4f"></div><div style="position:absolute;left:843px;top:504px;width:111px;height:1px;background:#6dbe4f"></div><div style="position:absolute;left:1064px;top:463px;width:1px;height:42px;background:#6dbe4f"></div><div style="position:absolute;left:954px;top:504px;width:111px;height:1px;background:#6dbe4f"></div><div style="position:absolute;left:181px;top:474px"><svg class="st" width="18" height="17" viewBox="0 0 18 17"><path d="M9.20 1.50L11.49 5.84L16.33 6.68L12.91 10.21L13.61 15.07L9.20 12.90L4.79 15.07L5.49 10.21L2.07 6.68L6.91 5.84Z" fill="#addd9e" stroke="#5aae4a" stroke-width="1.0" stroke-linejoin="round"/></svg></div><div class="t" style="left:177px;top:474.80px;font-size:15px;line-height:15px;color:#111;font-weight:700;width:110px;text-align:center;letter-spacing:0.5px">3.68</div><div class="t" style="left:272px;top:468.47px;font-size:9.6px;line-height:9.6px;color:#464c63;font-weight:700;width:11px;text-align:right;text-shadow:0 0 2px rgba(255,255,255,.6);-webkit-text-stroke:0.35px #464c63">4</div><div style="position:absolute;left:292px;top:474px"><svg class="st" width="18" height="17" viewBox="0 0 18 17"><path d="M9.20 1.50L11.49 5.84L16.33 6.68L12.91 10.21L13.61 15.07L9.20 12.90L4.79 15.07L5.49 10.21L2.07 6.68L6.91 5.84Z" fill="#addd9e" stroke="#5aae4a" stroke-width="1.0" stroke-linejoin="round"/></svg></div><div class="t" style="left:288px;top:474.80px;font-size:15px;line-height:15px;color:#111;font-weight:700;width:110px;text-align:center;letter-spacing:0.5px">3.64</div><div class="t" style="left:383px;top:468.47px;font-size:9.6px;line-height:9.6px;color:#464c63;font-weight:700;width:11px;text-align:right;text-shadow:0 0 2px rgba(255,255,255,.6);-webkit-text-stroke:0.35px #464c63">3</div><div style="position:absolute;left:403px;top:474px"><svg class="st" width="18" height="17" viewBox="0 0 18 17"><path d="M9.20 1.50L11.49 5.84L16.33 6.68L12.91 10.21L13.61 15.07L9.20 12.90L4.79 15.07L5.49 10.21L2.07 6.68L6.91 5.84Z" fill="#addd9e" stroke="#5aae4a" stroke-width="1.0" stroke-linejoin="round"/></svg></div><div class="t" style="left:399px;top:474.80px;font-size:15px;line-height:15px;color:#111;font-weight:700;width:110px;text-align:center;letter-spacing:0.5px">3.75</div><div class="t" style="left:494px;top:468.47px;font-size:9.6px;line-height:9.6px;color:#464c63;font-weight:700;width:11px;text-align:right;text-shadow:0 0 2px rgba(255,255,255,.6);-webkit-text-stroke:0.35px #464c63">3</div><div class="t" style="left:510px;top:475.80px;font-size:15px;line-height:15px;color:#111;font-weight:700;width:110px;text-align:center;letter-spacing:0.5px">3.8</div><div class="t" style="left:605px;top:468.47px;font-size:9.6px;line-height:9.6px;color:#464c63;font-weight:700;width:11px;text-align:right;text-shadow:0 0 2px rgba(255,255,255,.6);-webkit-text-stroke:0.35px #464c63">1</div><div class="t" style="left:621px;top:475.80px;font-size:15px;line-height:15px;color:#111;font-weight:700;width:110px;text-align:center;letter-spacing:0.5px">3.8</div><div class="t" style="left:716px;top:468.47px;font-size:9.6px;line-height:9.6px;color:#464c63;font-weight:700;width:11px;text-align:right;text-shadow:0 0 2px rgba(255,255,255,.6);-webkit-text-stroke:0.35px #464c63">1</div><div class="t" style="left:732px;top:475.80px;font-size:15px;line-height:15px;color:#111;font-weight:700;width:110px;text-align:center;letter-spacing:0.5px">3.78</div><div class="t" style="left:827px;top:468.47px;font-size:9.6px;line-height:9.6px;color:#464c63;font-weight:700;width:11px;text-align:right;text-shadow:0 0 2px rgba(255,255,255,.6);-webkit-text-stroke:0.35px #464c63">2</div><div style="position:absolute;left:847px;top:474px"><svg class="st" width="18" height="17" viewBox="0 0 18 17"><path d="M9.20 1.50L11.49 5.84L16.33 6.68L12.91 10.21L13.61 15.07L9.20 12.90L4.79 15.07L5.49 10.21L2.07 6.68L6.91 5.84Z" fill="#addd9e" stroke="#5aae4a" stroke-width="1.0" stroke-linejoin="round"/></svg></div><div class="t" style="left:843px;top:474.80px;font-size:15px;line-height:15px;color:#111;font-weight:700;width:110px;text-align:center;letter-spacing:0.5px">3.67</div><div class="t" style="left:938px;top:468.47px;font-size:9.6px;line-height:9.6px;color:#464c63;font-weight:700;width:11px;text-align:right;text-shadow:0 0 2px rgba(255,255,255,.6);-webkit-text-stroke:0.35px #464c63">3</div><div style="position:absolute;left:1px;top:505px;width:175px;height:41px;background:#fff"></div><div style="position:absolute;left:0px;top:546px;width:176px;height:1px;background:#dcdcdc"></div><div style="position:absolute;left:176px;top:505px;width:1px;height:42px;background:#e4dde6"></div><svg style="position:absolute;left:6px;top:509px" width="35" height="32" viewBox="0 0 35 32"><rect width="35" height="32" fill="#f5c42a"/><circle cx="17.5" cy="36" r="18.5" fill="#9595c8"/><path d="M8.9 12A8.5 8.5 0 0 0 25.9 12H21.9A4.5 4.5 0 0 1 12.9 12Z" fill="#dcfb7f"/><path d="M5.57 11.47A4.9 4.9 0 0 1 14.31 7.39" fill="none" stroke="#dcfb7f" stroke-width="3"/><path d="M13.53 31.34A7.2 7.2 0 0 1 27.50 33.80" fill="none" stroke="#dcfb7f" stroke-width="4.3"/></svg><div class="t" style="left:46px;top:517.89px;font-size:12.3px;line-height:12.3px;color:#3f73b4;font-weight:400;text-align:left;-webkit-text-stroke:0.2px #3f73b4;transform:scaleX(0.95);transform-origin:0 0">White, William</div><div style="position:absolute;left:177px;top:505px;width:111px;height:42px;background:#a3d78b"></div><div style="position:absolute;left:288px;top:505px;width:111px;height:42px;background:#a3d78b"></div><div style="position:absolute;left:399px;top:505px;width:111px;height:42px;background:#a3d78b"></div><div style="position:absolute;left:510px;top:505px;width:111px;height:42px;background:#a3d78b"></div><div style="position:absolute;left:621px;top:505px;width:111px;height:42px;background:#a3d78b"></div><div style="position:absolute;left:732px;top:505px;width:111px;height:42px;background:#a3d78b"></div><div style="position:absolute;left:843px;top:505px;width:111px;height:42px;background:#a3d78b"></div><div style="position:absolute;left:954px;top:505px;width:111px;height:42px;background:#a3d78b"></div><div style="position:absolute;left:287px;top:505px;width:1px;height:42px;background:#6dbe4f"></div><div style="position:absolute;left:177px;top:546px;width:111px;height:1px;background:#6dbe4f"></div><div style="position:absolute;left:398px;top:505px;width:1px;height:42px;background:#6dbe4f"></div><div style="position:absolute;left:288px;top:546px;width:111px;height:1px;background:#6dbe4f"></div><div style="position:absolute;left:509px;top:505px;width:1px;height:42px;background:#6dbe4f"></div><div style="position:absolute;left:399px;top:546px;width:111px;height:1px;background:#6dbe4f"></div><div style="position:absolute;left:620px;top:505px;width:1px;height:42px;background:#6dbe4f"></div><div style="position:absolute;left:510px;top:546px;width:111px;height:1px;background:#6dbe4f"></div><div style="position:absolute;left:731px;top:505px;width:1px;height:42px;background:#6dbe4f"></div><div style="position:absolute;left:621px;top:546px;width:111px;height:1px;background:#6dbe4f"></div><div style="position:absolute;left:842px;top:505px;width:1px;height:42px;background:#6dbe4f"></div><div style="position:absolute;left:732px;top:546px;width:111px;height:1px;background:#6dbe4f"></div><div style="position:absolute;left:953px;top:505px;width:1px;height:42px;background:#6dbe4f"></div><div style="position:absolute;left:843px;top:546px;width:111px;height:1px;background:#6dbe4f"></div><div style="position:absolute;left:1064px;top:505px;width:1px;height:42px;background:#6dbe4f"></div><div style="position:absolute;left:954px;top:546px;width:111px;height:1px;background:#6dbe4f"></div><div style="position:absolute;left:181px;top:516px"><svg class="st" width="18" height="17" viewBox="0 0 18 17"><path d="M9.20 1.50L11.49 5.84L16.33 6.68L12.91 10.21L13.61 15.07L9.20 12.90L4.79 15.07L5.49 10.21L2.07 6.68L6.91 5.84Z" fill="#addd9e" stroke="#5aae4a" stroke-width="1.0" stroke-linejoin="round"/></svg></div><div class="t" style="left:177px;top:516.80px;font-size:15px;line-height:15px;color:#111;font-weight:700;width:110px;text-align:center;letter-spacing:0.5px">3.69</div><div class="t" style="left:272px;top:510.47px;font-size:9.6px;line-height:9.6px;color:#464c63;font-weight:700;width:11px;text-align:right;text-shadow:0 0 2px rgba(255,255,255,.6);-webkit-text-stroke:0.35px #464c63">4</div><div style="position:absolute;left:292px;top:516px"><svg class="st" width="18" height="17" viewBox="0 0 18 17"><path d="M9.20 1.50L11.49 5.84L16.33 6.68L12.91 10.21L13.61 15.07L9.20 12.90L4.79 15.07L5.49 10.21L2.07 6.68L6.91 5.84Z" fill="#addd9e" stroke="#5aae4a" stroke-width="1.0" stroke-linejoin="round"/></svg></div><div class="t" style="left:288px;top:516.80px;font-size:15px;line-height:15px;color:#111;font-weight:700;width:110px;text-align:center;letter-spacing:0.5px">3.64</div><div class="t" style="left:383px;top:510.47px;font-size:9.6px;line-height:9.6px;color:#464c63;font-weight:700;width:11px;text-align:right;text-shadow:0 0 2px rgba(255,255,255,.6);-webkit-text-stroke:0.35px #464c63">3</div><div style="position:absolute;left:403px;top:516px"><svg class="st" width="18" height="17" viewBox="0 0 18 17"><path d="M9.20 1.50L11.49 5.84L16.33 6.68L12.91 10.21L13.61 15.07L9.20 12.90L4.79 15.07L5.49 10.21L2.07 6.68L6.91 5.84Z" fill="#addd9e" stroke="#5aae4a" stroke-width="1.0" stroke-linejoin="round"/></svg></div><div class="t" style="left:399px;top:516.80px;font-size:15px;line-height:15px;color:#111;font-weight:700;width:110px;text-align:center;letter-spacing:0.5px">3.75</div><div class="t" style="left:494px;top:510.47px;font-size:9.6px;line-height:9.6px;color:#464c63;font-weight:700;width:11px;text-align:right;text-shadow:0 0 2px rgba(255,255,255,.6);-webkit-text-stroke:0.35px #464c63">3</div><div class="t" style="left:510px;top:517.80px;font-size:15px;line-height:15px;color:#111;font-weight:700;width:110px;text-align:center;letter-spacing:0.5px">3.72</div><div class="t" style="left:605px;top:510.47px;font-size:9.6px;line-height:9.6px;color:#464c63;font-weight:700;width:11px;text-align:right;text-shadow:0 0 2px rgba(255,255,255,.6);-webkit-text-stroke:0.35px #464c63">1</div><div class="t" style="left:621px;top:517.80px;font-size:15px;line-height:15px;color:#111;font-weight:700;width:110px;text-align:center;letter-spacing:0.5px">3.72</div><div class="t" style="left:716px;top:510.47px;font-size:9.6px;line-height:9.6px;color:#464c63;font-weight:700;width:11px;text-align:right;text-shadow:0 0 2px rgba(255,255,255,.6);-webkit-text-stroke:0.35px #464c63">1</div><div class="t" style="left:732px;top:517.80px;font-size:15px;line-height:15px;color:#111;font-weight:700;width:110px;text-align:center;letter-spacing:0.5px">3.66</div><div class="t" style="left:827px;top:510.47px;font-size:9.6px;line-height:9.6px;color:#464c63;font-weight:700;width:11px;text-align:right;text-shadow:0 0 2px rgba(255,255,255,.6);-webkit-text-stroke:0.35px #464c63">2</div><div style="position:absolute;left:847px;top:516px"><svg class="st" width="18" height="17" viewBox="0 0 18 17"><path d="M9.20 1.50L11.49 5.84L16.33 6.68L12.91 10.21L13.61 15.07L9.20 12.90L4.79 15.07L5.49 10.21L2.07 6.68L6.91 5.84Z" fill="#addd9e" stroke="#5aae4a" stroke-width="1.0" stroke-linejoin="round"/></svg></div><div class="t" style="left:843px;top:516.80px;font-size:15px;line-height:15px;color:#111;font-weight:700;width:110px;text-align:center;letter-spacing:0.5px">3.72</div><div class="t" style="left:938px;top:510.47px;font-size:9.6px;line-height:9.6px;color:#464c63;font-weight:700;width:11px;text-align:right;text-shadow:0 0 2px rgba(255,255,255,.6);-webkit-text-stroke:0.35px #464c63">3</div><div style="position:absolute;left:1px;top:547px;width:175px;height:41px;background:#f8f8f8"></div><div style="position:absolute;left:0px;top:588px;width:176px;height:1px;background:#dcdcdc"></div><div style="position:absolute;left:176px;top:547px;width:1px;height:42px;background:#e4dde6"></div><svg style="position:absolute;left:6px;top:551px" width="35" height="32" viewBox="0 0 35 32"><rect width="35" height="32" fill="#ea7b78"/><rect x="0" y="19" width="31" height="12" rx="6" fill="#5cc2ec"/><rect x="0" y="19" width="8" height="12" fill="#5cc2ec"/><rect x="6" y="3.5" width="11" height="28.5" rx="5.5" fill="#6d4a5d"/><rect x="6" y="24" width="11" height="8" fill="#6d4a5d"/><rect x="6" y="19" width="11" height="13" fill="#2f79ad"/><circle cx="25" cy="11" r="3.2" fill="#dcfb7f"/></svg><div class="t" style="left:46px;top:559.89px;font-size:12.3px;line-height:12.3px;color:#3f73b4;font-weight:400;text-align:left;-webkit-text-stroke:0.2px #3f73b4;transform:scaleX(0.95);transform-origin:0 0">Williams, Anthony</div><div style="position:absolute;left:177px;top:547px;width:111px;height:42px;background:#a3d78b"></div><div style="position:absolute;left:288px;top:547px;width:111px;height:42px;background:#a3d78b"></div><div style="position:absolute;left:399px;top:547px;width:111px;height:42px;background:#a3d78b"></div><div style="position:absolute;left:510px;top:547px;width:111px;height:42px;background:#a3d78b"></div><div style="position:absolute;left:621px;top:547px;width:111px;height:42px;background:#a3d78b"></div><div style="position:absolute;left:732px;top:547px;width:111px;height:42px;background:#a3d78b"></div><div style="position:absolute;left:843px;top:547px;width:111px;height:42px;background:#c0e3ad"></div><div style="position:absolute;left:954px;top:547px;width:111px;height:42px;background:#c0e3ad"></div><div style="position:absolute;left:287px;top:547px;width:1px;height:42px;background:#6dbe4f"></div><div style="position:absolute;left:177px;top:588px;width:111px;height:1px;background:#6dbe4f"></div><div style="position:absolute;left:398px;top:547px;width:1px;height:42px;background:#6dbe4f"></div><div style="position:absolute;left:288px;top:588px;width:111px;height:1px;background:#6dbe4f"></div><div style="position:absolute;left:509px;top:547px;width:1px;height:42px;background:#6dbe4f"></div><div style="position:absolute;left:399px;top:588px;width:111px;height:1px;background:#6dbe4f"></div><div style="position:absolute;left:620px;top:547px;width:1px;height:42px;background:#6dbe4f"></div><div style="position:absolute;left:510px;top:588px;width:111px;height:1px;background:#6dbe4f"></div><div style="position:absolute;left:731px;top:547px;width:1px;height:42px;background:#6dbe4f"></div><div style="position:absolute;left:621px;top:588px;width:111px;height:1px;background:#6dbe4f"></div><div style="position:absolute;left:842px;top:547px;width:1px;height:42px;background:#6dbe4f"></div><div style="position:absolute;left:732px;top:588px;width:111px;height:1px;background:#6dbe4f"></div><div style="position:absolute;left:953px;top:547px;width:1px;height:42px;background:#6dbe4f"></div><div style="position:absolute;left:843px;top:588px;width:111px;height:1px;background:#6dbe4f"></div><div style="position:absolute;left:1064px;top:547px;width:1px;height:42px;background:#6dbe4f"></div><div style="position:absolute;left:954px;top:588px;width:111px;height:1px;background:#6dbe4f"></div><div style="position:absolute;left:181px;top:558px"><svg class="st" width="18" height="17" viewBox="0 0 18 17"><path d="M9.20 1.50L11.49 5.84L16.33 6.68L12.91 10.21L13.61 15.07L9.20 12.90L4.79 15.07L5.49 10.21L2.07 6.68L6.91 5.84Z" fill="#addd9e" stroke="#5aae4a" stroke-width="1.0" stroke-linejoin="round"/></svg></div><div class="t" style="left:177px;top:558.80px;font-size:15px;line-height:15px;color:#111;font-weight:700;width:110px;text-align:center;letter-spacing:0.5px">3.08</div><div class="t" style="left:272px;top:552.47px;font-size:9.6px;line-height:9.6px;color:#464c63;font-weight:700;width:11px;text-align:right;text-shadow:0 0 2px rgba(255,255,255,.6);-webkit-text-stroke:0.35px #464c63">4</div><div style="position:absolute;left:292px;top:558px"><svg class="st" width="18" height="17" viewBox="0 0 18 17"><path d="M9.20 1.50L11.49 5.84L16.33 6.68L12.91 10.21L13.61 15.07L9.20 12.90L4.79 15.07L5.49 10.21L2.07 6.68L6.91 5.84Z" fill="#addd9e" stroke="#5aae4a" stroke-width="1.0" stroke-linejoin="round"/></svg></div><div class="t" style="left:288px;top:558.80px;font-size:15px;line-height:15px;color:#111;font-weight:700;width:110px;text-align:center;letter-spacing:0.5px">3.28</div><div class="t" style="left:383px;top:552.47px;font-size:9.6px;line-height:9.6px;color:#464c63;font-weight:700;width:11px;text-align:right;text-shadow:0 0 2px rgba(255,255,255,.6);-webkit-text-stroke:0.35px #464c63">3</div><div style="position:absolute;left:403px;top:558px"><svg class="st" width="18" height="17" viewBox="0 0 18 17"><path d="M9.20 1.50L11.49 5.84L16.33 6.68L12.91 10.21L13.61 15.07L9.20 12.90L4.79 15.07L5.49 10.21L2.07 6.68L6.91 5.84Z" fill="#addd9e" stroke="#5aae4a" stroke-width="1.0" stroke-linejoin="round"/></svg></div><div class="t" style="left:399px;top:558.80px;font-size:15px;line-height:15px;color:#111;font-weight:700;width:110px;text-align:center;letter-spacing:0.5px">3.28</div><div class="t" style="left:494px;top:552.47px;font-size:9.6px;line-height:9.6px;color:#464c63;font-weight:700;width:11px;text-align:right;text-shadow:0 0 2px rgba(255,255,255,.6);-webkit-text-stroke:0.35px #464c63">3</div><div class="t" style="left:510px;top:559.80px;font-size:15px;line-height:15px;color:#111;font-weight:700;width:110px;text-align:center;letter-spacing:0.5px">3.12</div><div class="t" style="left:605px;top:552.47px;font-size:9.6px;line-height:9.6px;color:#464c63;font-weight:700;width:11px;text-align:right;text-shadow:0 0 2px rgba(255,255,255,.6);-webkit-text-stroke:0.35px #464c63">1</div><div class="t" style="left:621px;top:559.80px;font-size:15px;line-height:15px;color:#111;font-weight:700;width:110px;text-align:center;letter-spacing:0.5px">3.12</div><div class="t" style="left:716px;top:552.47px;font-size:9.6px;line-height:9.6px;color:#464c63;font-weight:700;width:11px;text-align:right;text-shadow:0 0 2px rgba(255,255,255,.6);-webkit-text-stroke:0.35px #464c63">1</div><div class="t" style="left:732px;top:559.80px;font-size:15px;line-height:15px;color:#111;font-weight:700;width:110px;text-align:center;letter-spacing:0.5px">3.24</div><div class="t" style="left:827px;top:552.47px;font-size:9.6px;line-height:9.6px;color:#464c63;font-weight:700;width:11px;text-align:right;text-shadow:0 0 2px rgba(255,255,255,.6);-webkit-text-stroke:0.35px #464c63">2</div><div style="position:absolute;left:847px;top:558px"><svg class="st" width="18" height="17" viewBox="0 0 18 17"><path d="M9.20 1.50L11.49 5.84L16.33 6.68L12.91 10.21L13.61 15.07L9.20 12.90L4.79 15.07L5.49 10.21L2.07 6.68L6.91 5.84Z" fill="#addd9e" stroke="#5aae4a" stroke-width="1.0" stroke-linejoin="round"/></svg></div><div class="t" style="left:843px;top:558.80px;font-size:15px;line-height:15px;color:#111;font-weight:700;width:110px;text-align:center;letter-spacing:0.5px">2.88</div><div class="t" style="left:938px;top:552.47px;font-size:9.6px;line-height:9.6px;color:#464c63;font-weight:700;width:11px;text-align:right;text-shadow:0 0 2px rgba(255,255,255,.6);-webkit-text-stroke:0.35px #464c63">3</div></div><div style="position:absolute;left:390px;top:695px;width:802px;height:8px;border-radius:4px;background:#ececec"></div><div style="position:absolute;left:390px;top:695px;width:252px;height:8px;border-radius:4px;background:#777"></div>
</body></html>
